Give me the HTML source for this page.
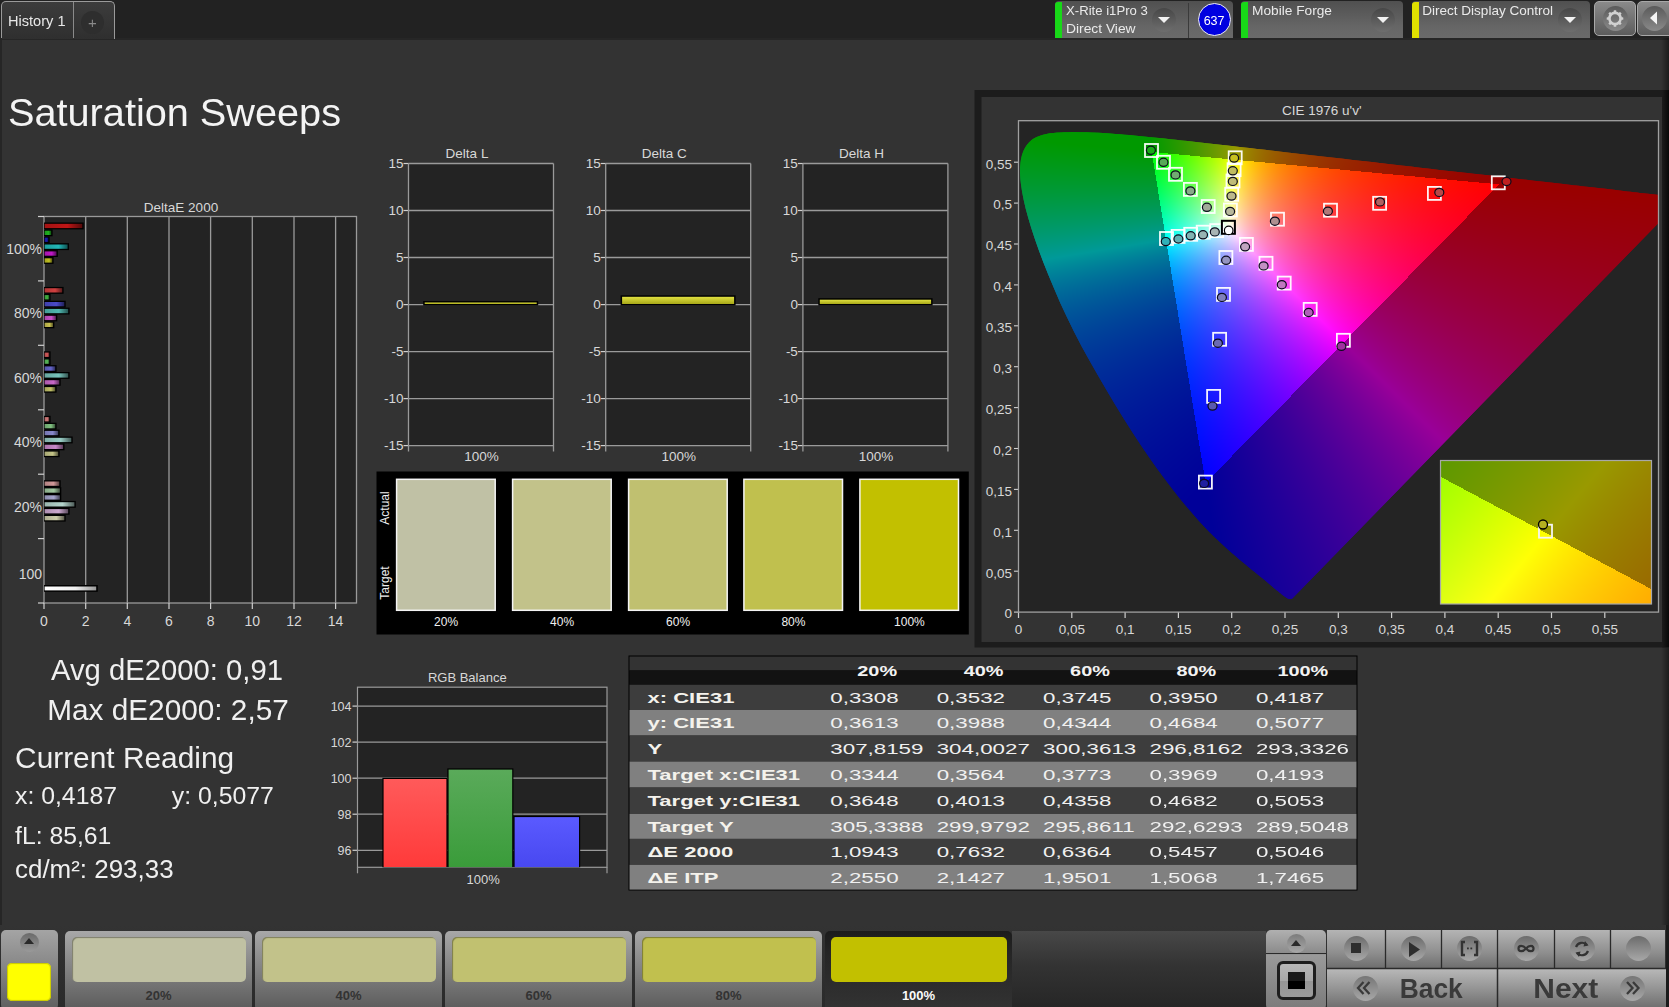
<!DOCTYPE html><html><head><meta charset="utf-8"><style>
*{margin:0;padding:0;box-sizing:border-box}
html,body{width:1669px;height:1007px;overflow:hidden;background:#333;font-family:"Liberation Sans",sans-serif;color:#e6e6e6}
.a{position:absolute}
svg text{font-family:"Liberation Sans",sans-serif}
</style></head><body><div class="a" style="left:0;top:0;width:1669px;height:38px;background:#222"></div><div class="a" style="left:0;top:38px;width:1669px;height:2px;background:#262626"></div><div class="a" style="left:1px;top:1px;width:114px;height:38px;border:1px solid #9a9a9a;border-bottom:none;border-radius:5px 5px 0 0;background:linear-gradient(#3c3c3c,#2f2f2f)"></div><div class="a" style="left:73px;top:2px;width:1px;height:36px;background:#8a8a8a"></div><div class="a" style="left:81px;top:11px;width:23px;height:23px;border-radius:50%;background:#2e2e2e"></div><div class="a" style="left:1055px;top:1px;width:178px;height:37px;border-radius:4px 4px 0 0;background:linear-gradient(#505050,#666 70%,#6a6a6a)"></div><div class="a" style="left:1055px;top:2px;width:7px;height:36px;border-radius:3px 0 0 0;background:#18d818"></div><div class="a" style="left:1241px;top:1px;width:162px;height:37px;border-radius:4px 4px 0 0;background:linear-gradient(#505050,#666 70%,#6a6a6a)"></div><div class="a" style="left:1241px;top:2px;width:7px;height:36px;border-radius:3px 0 0 0;background:#18d818"></div><div class="a" style="left:1412px;top:1px;width:178px;height:37px;border-radius:4px 4px 0 0;background:linear-gradient(#505050,#666 70%,#6a6a6a)"></div><div class="a" style="left:1412px;top:2px;width:7px;height:36px;border-radius:3px 0 0 0;background:#e0e000"></div><div class="a" style="left:1188px;top:3px;width:1.2px;height:35px;background:#3a3a3a"></div><div class="a" style="left:1152.2px;top:7.5px;width:24px;height:24px;border-radius:50%;background:linear-gradient(#474747,#6e6e6e)"></div><div class="a" style="left:1158.2px;top:16.5px;width:0;height:0;border-left:6px solid transparent;border-right:6px solid transparent;border-top:6.5px solid #f2f2f2"></div><div class="a" style="left:1371px;top:7.5px;width:24px;height:24px;border-radius:50%;background:linear-gradient(#474747,#6e6e6e)"></div><div class="a" style="left:1377px;top:16.5px;width:0;height:0;border-left:6px solid transparent;border-right:6px solid transparent;border-top:6.5px solid #f2f2f2"></div><div class="a" style="left:1558px;top:7.5px;width:24px;height:24px;border-radius:50%;background:linear-gradient(#474747,#6e6e6e)"></div><div class="a" style="left:1564px;top:16.5px;width:0;height:0;border-left:6px solid transparent;border-right:6px solid transparent;border-top:6.5px solid #f2f2f2"></div><div class="a" style="left:1197.6px;top:3px;width:33px;height:33px;border-radius:50%;background:#0000e0;border:1.2px solid #f0f0f0"></div><div class="a" style="left:1594px;top:1px;width:42px;height:35px;border-radius:5px;border:1px solid #a8a8a8;background:linear-gradient(#8a8a8a,#5c5c5c)"></div><div class="a" style="left:1637px;top:1px;width:40px;height:35px;border-radius:5px;border:1px solid #a8a8a8;background:linear-gradient(#8a8a8a,#5c5c5c)"></div><div class="a" style="left:1603px;top:6px;width:25px;height:25px;border-radius:50%;background:linear-gradient(#5a5a5a,#8a8a8a)"></div><div class="a" style="left:1642px;top:6px;width:25px;height:25px;border-radius:50%;background:linear-gradient(#5a5a5a,#8a8a8a)"></div><div class="a" style="left:0;top:38px;width:2px;height:887px;background:#262626"></div><svg class="a" style="left:0;top:0" width="1669" height="1007" viewBox="0 0 1669 1007"><defs><linearGradient id="b00" x1="0" y1="0" x2="1" y2="0"><stop offset="0" stop-color="#c01616" stop-opacity="0.85"/><stop offset="0.6" stop-color="#c01616"/><stop offset="1" stop-color="#c01616" stop-opacity="0.45"/></linearGradient><linearGradient id="b01" x1="0" y1="0" x2="1" y2="0"><stop offset="0" stop-color="#1fb01f" stop-opacity="0.85"/><stop offset="0.6" stop-color="#1fb01f"/><stop offset="1" stop-color="#1fb01f" stop-opacity="0.45"/></linearGradient><linearGradient id="b02" x1="0" y1="0" x2="1" y2="0"><stop offset="0" stop-color="#1a1ab0" stop-opacity="0.85"/><stop offset="0.6" stop-color="#1a1ab0"/><stop offset="1" stop-color="#1a1ab0" stop-opacity="0.45"/></linearGradient><linearGradient id="b03" x1="0" y1="0" x2="1" y2="0"><stop offset="0" stop-color="#22b8b8" stop-opacity="0.85"/><stop offset="0.6" stop-color="#22b8b8"/><stop offset="1" stop-color="#22b8b8" stop-opacity="0.45"/></linearGradient><linearGradient id="b04" x1="0" y1="0" x2="1" y2="0"><stop offset="0" stop-color="#c018c8" stop-opacity="0.85"/><stop offset="0.6" stop-color="#c018c8"/><stop offset="1" stop-color="#c018c8" stop-opacity="0.45"/></linearGradient><linearGradient id="b05" x1="0" y1="0" x2="1" y2="0"><stop offset="0" stop-color="#c0c022" stop-opacity="0.85"/><stop offset="0.6" stop-color="#c0c022"/><stop offset="1" stop-color="#c0c022" stop-opacity="0.45"/></linearGradient><linearGradient id="b10" x1="0" y1="0" x2="1" y2="0"><stop offset="0" stop-color="#d04040" stop-opacity="0.85"/><stop offset="0.6" stop-color="#d04040"/><stop offset="1" stop-color="#d04040" stop-opacity="0.45"/></linearGradient><linearGradient id="b11" x1="0" y1="0" x2="1" y2="0"><stop offset="0" stop-color="#40b040" stop-opacity="0.85"/><stop offset="0.6" stop-color="#40b040"/><stop offset="1" stop-color="#40b040" stop-opacity="0.45"/></linearGradient><linearGradient id="b12" x1="0" y1="0" x2="1" y2="0"><stop offset="0" stop-color="#4a4ac8" stop-opacity="0.85"/><stop offset="0.6" stop-color="#4a4ac8"/><stop offset="1" stop-color="#4a4ac8" stop-opacity="0.45"/></linearGradient><linearGradient id="b13" x1="0" y1="0" x2="1" y2="0"><stop offset="0" stop-color="#50b8b0" stop-opacity="0.85"/><stop offset="0.6" stop-color="#50b8b0"/><stop offset="1" stop-color="#50b8b0" stop-opacity="0.45"/></linearGradient><linearGradient id="b14" x1="0" y1="0" x2="1" y2="0"><stop offset="0" stop-color="#c850c8" stop-opacity="0.85"/><stop offset="0.6" stop-color="#c850c8"/><stop offset="1" stop-color="#c850c8" stop-opacity="0.45"/></linearGradient><linearGradient id="b15" x1="0" y1="0" x2="1" y2="0"><stop offset="0" stop-color="#c8c050" stop-opacity="0.85"/><stop offset="0.6" stop-color="#c8c050"/><stop offset="1" stop-color="#c8c050" stop-opacity="0.45"/></linearGradient><linearGradient id="b20" x1="0" y1="0" x2="1" y2="0"><stop offset="0" stop-color="#d05858" stop-opacity="0.85"/><stop offset="0.6" stop-color="#d05858"/><stop offset="1" stop-color="#d05858" stop-opacity="0.45"/></linearGradient><linearGradient id="b21" x1="0" y1="0" x2="1" y2="0"><stop offset="0" stop-color="#58b858" stop-opacity="0.85"/><stop offset="0.6" stop-color="#58b858"/><stop offset="1" stop-color="#58b858" stop-opacity="0.45"/></linearGradient><linearGradient id="b22" x1="0" y1="0" x2="1" y2="0"><stop offset="0" stop-color="#6464c8" stop-opacity="0.85"/><stop offset="0.6" stop-color="#6464c8"/><stop offset="1" stop-color="#6464c8" stop-opacity="0.45"/></linearGradient><linearGradient id="b23" x1="0" y1="0" x2="1" y2="0"><stop offset="0" stop-color="#78c4bc" stop-opacity="0.85"/><stop offset="0.6" stop-color="#78c4bc"/><stop offset="1" stop-color="#78c4bc" stop-opacity="0.45"/></linearGradient><linearGradient id="b24" x1="0" y1="0" x2="1" y2="0"><stop offset="0" stop-color="#c868c8" stop-opacity="0.85"/><stop offset="0.6" stop-color="#c868c8"/><stop offset="1" stop-color="#c868c8" stop-opacity="0.45"/></linearGradient><linearGradient id="b25" x1="0" y1="0" x2="1" y2="0"><stop offset="0" stop-color="#c0c068" stop-opacity="0.85"/><stop offset="0.6" stop-color="#c0c068"/><stop offset="1" stop-color="#c0c068" stop-opacity="0.45"/></linearGradient><linearGradient id="b30" x1="0" y1="0" x2="1" y2="0"><stop offset="0" stop-color="#d07878" stop-opacity="0.85"/><stop offset="0.6" stop-color="#d07878"/><stop offset="1" stop-color="#d07878" stop-opacity="0.45"/></linearGradient><linearGradient id="b31" x1="0" y1="0" x2="1" y2="0"><stop offset="0" stop-color="#80c080" stop-opacity="0.85"/><stop offset="0.6" stop-color="#80c080"/><stop offset="1" stop-color="#80c080" stop-opacity="0.45"/></linearGradient><linearGradient id="b32" x1="0" y1="0" x2="1" y2="0"><stop offset="0" stop-color="#8888cc" stop-opacity="0.85"/><stop offset="0.6" stop-color="#8888cc"/><stop offset="1" stop-color="#8888cc" stop-opacity="0.45"/></linearGradient><linearGradient id="b33" x1="0" y1="0" x2="1" y2="0"><stop offset="0" stop-color="#98ccc4" stop-opacity="0.85"/><stop offset="0.6" stop-color="#98ccc4"/><stop offset="1" stop-color="#98ccc4" stop-opacity="0.45"/></linearGradient><linearGradient id="b34" x1="0" y1="0" x2="1" y2="0"><stop offset="0" stop-color="#c888c8" stop-opacity="0.85"/><stop offset="0.6" stop-color="#c888c8"/><stop offset="1" stop-color="#c888c8" stop-opacity="0.45"/></linearGradient><linearGradient id="b35" x1="0" y1="0" x2="1" y2="0"><stop offset="0" stop-color="#c4c488" stop-opacity="0.85"/><stop offset="0.6" stop-color="#c4c488"/><stop offset="1" stop-color="#c4c488" stop-opacity="0.45"/></linearGradient><linearGradient id="b40" x1="0" y1="0" x2="1" y2="0"><stop offset="0" stop-color="#d09898" stop-opacity="0.85"/><stop offset="0.6" stop-color="#d09898"/><stop offset="1" stop-color="#d09898" stop-opacity="0.45"/></linearGradient><linearGradient id="b41" x1="0" y1="0" x2="1" y2="0"><stop offset="0" stop-color="#a0c8a0" stop-opacity="0.85"/><stop offset="0.6" stop-color="#a0c8a0"/><stop offset="1" stop-color="#a0c8a0" stop-opacity="0.45"/></linearGradient><linearGradient id="b42" x1="0" y1="0" x2="1" y2="0"><stop offset="0" stop-color="#a4a4cc" stop-opacity="0.85"/><stop offset="0.6" stop-color="#a4a4cc"/><stop offset="1" stop-color="#a4a4cc" stop-opacity="0.45"/></linearGradient><linearGradient id="b43" x1="0" y1="0" x2="1" y2="0"><stop offset="0" stop-color="#b4d4cc" stop-opacity="0.85"/><stop offset="0.6" stop-color="#b4d4cc"/><stop offset="1" stop-color="#b4d4cc" stop-opacity="0.45"/></linearGradient><linearGradient id="b44" x1="0" y1="0" x2="1" y2="0"><stop offset="0" stop-color="#cca8d0" stop-opacity="0.85"/><stop offset="0.6" stop-color="#cca8d0"/><stop offset="1" stop-color="#cca8d0" stop-opacity="0.45"/></linearGradient><linearGradient id="b45" x1="0" y1="0" x2="1" y2="0"><stop offset="0" stop-color="#ccccaa" stop-opacity="0.85"/><stop offset="0.6" stop-color="#ccccaa"/><stop offset="1" stop-color="#ccccaa" stop-opacity="0.45"/></linearGradient><linearGradient id="bw" x1="0" y1="0" x2="1" y2="0"><stop offset="0" stop-color="#fff"/><stop offset="0.6" stop-color="#eee"/><stop offset="1" stop-color="#999"/></linearGradient><linearGradient id="ylw" x1="0" y1="0" x2="0" y2="1"><stop offset="0" stop-color="#e0e040"/><stop offset="1" stop-color="#a8a818"/></linearGradient><linearGradient id="gr" x1="0" y1="0" x2="0" y2="1"><stop offset="0" stop-color="#ff5a5a"/><stop offset="1" stop-color="#ff3a3a"/></linearGradient><linearGradient id="gg" x1="0" y1="0" x2="0" y2="1"><stop offset="0" stop-color="#5aaa5a"/><stop offset="1" stop-color="#3a9c3a"/></linearGradient><linearGradient id="gb" x1="0" y1="0" x2="0" y2="1"><stop offset="0" stop-color="#5a5aff"/><stop offset="1" stop-color="#4848f0"/></linearGradient><linearGradient id="rdk" x1="0" y1="0" x2="1" y2="0"><stop offset="0" stop-color="#1c1c1c"/><stop offset="1" stop-color="#080808"/></linearGradient></defs><rect x="44" y="216.5" width="312.5" height="386.5" fill="#232323"/><line x1="85.7" y1="216.5" x2="85.7" y2="603" stroke="#9a9a9a" stroke-width="1.3"/><line x1="127.3" y1="216.5" x2="127.3" y2="603" stroke="#9a9a9a" stroke-width="1.3"/><line x1="169.0" y1="216.5" x2="169.0" y2="603" stroke="#9a9a9a" stroke-width="1.3"/><line x1="210.6" y1="216.5" x2="210.6" y2="603" stroke="#9a9a9a" stroke-width="1.3"/><line x1="252.3" y1="216.5" x2="252.3" y2="603" stroke="#9a9a9a" stroke-width="1.3"/><line x1="294.0" y1="216.5" x2="294.0" y2="603" stroke="#9a9a9a" stroke-width="1.3"/><line x1="335.6" y1="216.5" x2="335.6" y2="603" stroke="#9a9a9a" stroke-width="1.3"/><rect x="44" y="216.5" width="312.5" height="386.5" fill="none" stroke="#9a9a9a" stroke-width="1.3"/><line x1="38" y1="216.5" x2="44" y2="216.5" stroke="#d0d0d0" stroke-width="1.2"/><line x1="38" y1="280.9" x2="44" y2="280.9" stroke="#d0d0d0" stroke-width="1.2"/><line x1="38" y1="345.3" x2="44" y2="345.3" stroke="#d0d0d0" stroke-width="1.2"/><line x1="38" y1="409.8" x2="44" y2="409.8" stroke="#d0d0d0" stroke-width="1.2"/><line x1="38" y1="474.2" x2="44" y2="474.2" stroke="#d0d0d0" stroke-width="1.2"/><line x1="38" y1="538.6" x2="44" y2="538.6" stroke="#d0d0d0" stroke-width="1.2"/><line x1="38" y1="603.0" x2="44" y2="603.0" stroke="#d0d0d0" stroke-width="1.2"/><line x1="44.0" y1="603" x2="44.0" y2="609" stroke="#d0d0d0" stroke-width="1.2"/><text x="44.0" y="626" fill="#d8d8d8" font-size="14" text-anchor="middle">0</text><line x1="85.7" y1="603" x2="85.7" y2="609" stroke="#d0d0d0" stroke-width="1.2"/><text x="85.7" y="626" fill="#d8d8d8" font-size="14" text-anchor="middle">2</text><line x1="127.3" y1="603" x2="127.3" y2="609" stroke="#d0d0d0" stroke-width="1.2"/><text x="127.3" y="626" fill="#d8d8d8" font-size="14" text-anchor="middle">4</text><line x1="169.0" y1="603" x2="169.0" y2="609" stroke="#d0d0d0" stroke-width="1.2"/><text x="169.0" y="626" fill="#d8d8d8" font-size="14" text-anchor="middle">6</text><line x1="210.6" y1="603" x2="210.6" y2="609" stroke="#d0d0d0" stroke-width="1.2"/><text x="210.6" y="626" fill="#d8d8d8" font-size="14" text-anchor="middle">8</text><line x1="252.3" y1="603" x2="252.3" y2="609" stroke="#d0d0d0" stroke-width="1.2"/><text x="252.3" y="626" fill="#d8d8d8" font-size="14" text-anchor="middle">10</text><line x1="294.0" y1="603" x2="294.0" y2="609" stroke="#d0d0d0" stroke-width="1.2"/><text x="294.0" y="626" fill="#d8d8d8" font-size="14" text-anchor="middle">12</text><line x1="335.6" y1="603" x2="335.6" y2="609" stroke="#d0d0d0" stroke-width="1.2"/><text x="335.6" y="626" fill="#d8d8d8" font-size="14" text-anchor="middle">14</text><text x="42" y="254.0" fill="#d8d8d8" font-size="14" text-anchor="end">100%</text><text x="42" y="318.4" fill="#d8d8d8" font-size="14" text-anchor="end">80%</text><text x="42" y="382.8" fill="#d8d8d8" font-size="14" text-anchor="end">60%</text><text x="42" y="447.3" fill="#d8d8d8" font-size="14" text-anchor="end">40%</text><text x="42" y="511.7" fill="#d8d8d8" font-size="14" text-anchor="end">20%</text><text x="42" y="578.5" fill="#d8d8d8" font-size="14" text-anchor="end">100</text><text x="181" y="212" fill="#d8d8d8" font-size="13.5" text-anchor="middle">DeltaE 2000</text><rect x="44" y="222.5" width="39.7" height="6.9" fill="#000"/><rect x="44.6" y="223.8" width="37.7" height="4.3" fill="url(#b00)"/><rect x="44" y="229.4" width="8.6" height="6.9" fill="#000"/><rect x="44.6" y="230.7" width="6.6" height="4.3" fill="url(#b01)"/><rect x="44" y="236.3" width="5.7" height="6.9" fill="#000"/><rect x="44.6" y="237.6" width="3.7" height="4.3" fill="url(#b02)"/><rect x="44" y="243.2" width="25.0" height="6.9" fill="#000"/><rect x="44.6" y="244.5" width="23.0" height="4.3" fill="url(#b03)"/><rect x="44" y="250.1" width="13.9" height="6.9" fill="#000"/><rect x="44.6" y="251.4" width="11.9" height="4.3" fill="url(#b04)"/><rect x="44" y="257.0" width="9.6" height="6.9" fill="#000"/><rect x="44.6" y="258.3" width="7.6" height="4.3" fill="url(#b05)"/><rect x="44" y="286.9" width="19.6" height="6.9" fill="#000"/><rect x="44.6" y="288.2" width="17.6" height="4.3" fill="url(#b10)"/><rect x="44" y="293.8" width="6.6" height="6.9" fill="#000"/><rect x="44.6" y="295.1" width="4.6" height="4.3" fill="url(#b11)"/><rect x="44" y="300.7" width="21.7" height="6.9" fill="#000"/><rect x="44.6" y="302.0" width="19.7" height="4.3" fill="url(#b12)"/><rect x="44" y="307.6" width="25.6" height="6.9" fill="#000"/><rect x="44.6" y="308.9" width="23.6" height="4.3" fill="url(#b13)"/><rect x="44" y="314.5" width="13.3" height="6.9" fill="#000"/><rect x="44.6" y="315.8" width="11.3" height="4.3" fill="url(#b14)"/><rect x="44" y="321.4" width="10.4" height="6.9" fill="#000"/><rect x="44.6" y="322.7" width="8.4" height="4.3" fill="url(#b15)"/><rect x="44" y="351.3" width="6.6" height="6.9" fill="#000"/><rect x="44.6" y="352.6" width="4.6" height="4.3" fill="url(#b20)"/><rect x="44" y="358.2" width="6.6" height="6.9" fill="#000"/><rect x="44.6" y="359.5" width="4.6" height="4.3" fill="url(#b21)"/><rect x="44" y="365.1" width="12.6" height="6.9" fill="#000"/><rect x="44.6" y="366.4" width="10.6" height="4.3" fill="url(#b22)"/><rect x="44" y="372.0" width="25.6" height="6.9" fill="#000"/><rect x="44.6" y="373.3" width="23.6" height="4.3" fill="url(#b23)"/><rect x="44" y="378.9" width="16.7" height="6.9" fill="#000"/><rect x="44.6" y="380.2" width="14.7" height="4.3" fill="url(#b24)"/><rect x="44" y="385.8" width="12.6" height="6.9" fill="#000"/><rect x="44.6" y="387.1" width="10.6" height="4.3" fill="url(#b25)"/><rect x="44" y="415.8" width="6.6" height="6.9" fill="#000"/><rect x="44.6" y="417.1" width="4.6" height="4.3" fill="url(#b30)"/><rect x="44" y="422.7" width="12.6" height="6.9" fill="#000"/><rect x="44.6" y="424.0" width="10.6" height="4.3" fill="url(#b31)"/><rect x="44" y="429.6" width="15.6" height="6.9" fill="#000"/><rect x="44.6" y="430.9" width="13.6" height="4.3" fill="url(#b32)"/><rect x="44" y="436.5" width="28.7" height="6.9" fill="#000"/><rect x="44.6" y="437.8" width="26.7" height="4.3" fill="url(#b33)"/><rect x="44" y="443.4" width="20.5" height="6.9" fill="#000"/><rect x="44.6" y="444.7" width="18.5" height="4.3" fill="url(#b34)"/><rect x="44" y="450.3" width="15.6" height="6.9" fill="#000"/><rect x="44.6" y="451.6" width="13.6" height="4.3" fill="url(#b35)"/><rect x="44" y="480.2" width="16.7" height="6.9" fill="#000"/><rect x="44.6" y="481.5" width="14.7" height="4.3" fill="url(#b40)"/><rect x="44" y="487.1" width="17.3" height="6.9" fill="#000"/><rect x="44.6" y="488.4" width="15.3" height="4.3" fill="url(#b41)"/><rect x="44" y="494.0" width="17.3" height="6.9" fill="#000"/><rect x="44.6" y="495.3" width="15.3" height="4.3" fill="url(#b42)"/><rect x="44" y="500.9" width="31.8" height="6.9" fill="#000"/><rect x="44.6" y="502.2" width="29.8" height="4.3" fill="url(#b43)"/><rect x="44" y="507.8" width="25.6" height="6.9" fill="#000"/><rect x="44.6" y="509.1" width="23.6" height="4.3" fill="url(#b44)"/><rect x="44" y="514.7" width="21.7" height="6.9" fill="#000"/><rect x="44.6" y="516.0" width="19.7" height="4.3" fill="url(#b45)"/><rect x="44" y="585" width="53.8" height="6.8" fill="#000"/><rect x="44.6" y="586.5" width="51.6" height="3.9" fill="url(#bw)"/><rect x="408.5" y="163.5" width="145.0" height="282.1" fill="#232323"/><line x1="408.5" y1="163.5" x2="553.5" y2="163.5" stroke="#9a9a9a" stroke-width="1.3"/><line x1="403.5" y1="163.5" x2="408.5" y2="163.5" stroke="#d0d0d0" stroke-width="1.2"/><text x="403.5" y="168.3" fill="#d8d8d8" font-size="13.5" text-anchor="end">15</text><line x1="408.5" y1="210.5" x2="553.5" y2="210.5" stroke="#9a9a9a" stroke-width="1.3"/><line x1="403.5" y1="210.5" x2="408.5" y2="210.5" stroke="#d0d0d0" stroke-width="1.2"/><text x="403.5" y="215.3" fill="#d8d8d8" font-size="13.5" text-anchor="end">10</text><line x1="408.5" y1="257.5" x2="553.5" y2="257.5" stroke="#9a9a9a" stroke-width="1.3"/><line x1="403.5" y1="257.5" x2="408.5" y2="257.5" stroke="#d0d0d0" stroke-width="1.2"/><text x="403.5" y="262.3" fill="#d8d8d8" font-size="13.5" text-anchor="end">5</text><line x1="408.5" y1="304.6" x2="553.5" y2="304.6" stroke="#9a9a9a" stroke-width="1.3"/><line x1="403.5" y1="304.6" x2="408.5" y2="304.6" stroke="#d0d0d0" stroke-width="1.2"/><text x="403.5" y="309.4" fill="#d8d8d8" font-size="13.5" text-anchor="end">0</text><line x1="408.5" y1="351.6" x2="553.5" y2="351.6" stroke="#9a9a9a" stroke-width="1.3"/><line x1="403.5" y1="351.6" x2="408.5" y2="351.6" stroke="#d0d0d0" stroke-width="1.2"/><text x="403.5" y="356.4" fill="#d8d8d8" font-size="13.5" text-anchor="end">-5</text><line x1="408.5" y1="398.6" x2="553.5" y2="398.6" stroke="#9a9a9a" stroke-width="1.3"/><line x1="403.5" y1="398.6" x2="408.5" y2="398.6" stroke="#d0d0d0" stroke-width="1.2"/><text x="403.5" y="403.4" fill="#d8d8d8" font-size="13.5" text-anchor="end">-10</text><line x1="408.5" y1="445.6" x2="553.5" y2="445.6" stroke="#9a9a9a" stroke-width="1.3"/><line x1="403.5" y1="445.6" x2="408.5" y2="445.6" stroke="#d0d0d0" stroke-width="1.2"/><text x="403.5" y="450.4" fill="#d8d8d8" font-size="13.5" text-anchor="end">-15</text><line x1="408.5" y1="163.5" x2="408.5" y2="451.6" stroke="#9a9a9a" stroke-width="1.3"/><line x1="553.5" y1="163.5" x2="553.5" y2="451.6" stroke="#9a9a9a" stroke-width="1.3"/><text x="467.0" y="158" fill="#d8d8d8" font-size="13.5" text-anchor="middle">Delta L</text><text x="481.5" y="461" fill="#d8d8d8" font-size="13.5" text-anchor="middle">100%</text><rect x="423.2" y="301.0" width="115.0" height="4.5" fill="#000"/><rect x="424.7" y="302.5" width="112.0" height="1.5" fill="url(#ylw)"/><rect x="605.7" y="163.5" width="145.0" height="282.1" fill="#232323"/><line x1="605.7" y1="163.5" x2="750.7" y2="163.5" stroke="#9a9a9a" stroke-width="1.3"/><line x1="600.7" y1="163.5" x2="605.7" y2="163.5" stroke="#d0d0d0" stroke-width="1.2"/><text x="600.7" y="168.3" fill="#d8d8d8" font-size="13.5" text-anchor="end">15</text><line x1="605.7" y1="210.5" x2="750.7" y2="210.5" stroke="#9a9a9a" stroke-width="1.3"/><line x1="600.7" y1="210.5" x2="605.7" y2="210.5" stroke="#d0d0d0" stroke-width="1.2"/><text x="600.7" y="215.3" fill="#d8d8d8" font-size="13.5" text-anchor="end">10</text><line x1="605.7" y1="257.5" x2="750.7" y2="257.5" stroke="#9a9a9a" stroke-width="1.3"/><line x1="600.7" y1="257.5" x2="605.7" y2="257.5" stroke="#d0d0d0" stroke-width="1.2"/><text x="600.7" y="262.3" fill="#d8d8d8" font-size="13.5" text-anchor="end">5</text><line x1="605.7" y1="304.6" x2="750.7" y2="304.6" stroke="#9a9a9a" stroke-width="1.3"/><line x1="600.7" y1="304.6" x2="605.7" y2="304.6" stroke="#d0d0d0" stroke-width="1.2"/><text x="600.7" y="309.4" fill="#d8d8d8" font-size="13.5" text-anchor="end">0</text><line x1="605.7" y1="351.6" x2="750.7" y2="351.6" stroke="#9a9a9a" stroke-width="1.3"/><line x1="600.7" y1="351.6" x2="605.7" y2="351.6" stroke="#d0d0d0" stroke-width="1.2"/><text x="600.7" y="356.4" fill="#d8d8d8" font-size="13.5" text-anchor="end">-5</text><line x1="605.7" y1="398.6" x2="750.7" y2="398.6" stroke="#9a9a9a" stroke-width="1.3"/><line x1="600.7" y1="398.6" x2="605.7" y2="398.6" stroke="#d0d0d0" stroke-width="1.2"/><text x="600.7" y="403.4" fill="#d8d8d8" font-size="13.5" text-anchor="end">-10</text><line x1="605.7" y1="445.6" x2="750.7" y2="445.6" stroke="#9a9a9a" stroke-width="1.3"/><line x1="600.7" y1="445.6" x2="605.7" y2="445.6" stroke="#d0d0d0" stroke-width="1.2"/><text x="600.7" y="450.4" fill="#d8d8d8" font-size="13.5" text-anchor="end">-15</text><line x1="605.7" y1="163.5" x2="605.7" y2="451.6" stroke="#9a9a9a" stroke-width="1.3"/><line x1="750.7" y1="163.5" x2="750.7" y2="451.6" stroke="#9a9a9a" stroke-width="1.3"/><text x="664.2" y="158" fill="#d8d8d8" font-size="13.5" text-anchor="middle">Delta C</text><text x="678.7" y="461" fill="#d8d8d8" font-size="13.5" text-anchor="middle">100%</text><rect x="620.6" y="295.3" width="115.0" height="10.2" fill="#000"/><rect x="622.1" y="296.8" width="112.0" height="7.2" fill="url(#ylw)"/><rect x="802.9" y="163.5" width="145.0" height="282.1" fill="#232323"/><line x1="802.9" y1="163.5" x2="947.9" y2="163.5" stroke="#9a9a9a" stroke-width="1.3"/><line x1="797.9" y1="163.5" x2="802.9" y2="163.5" stroke="#d0d0d0" stroke-width="1.2"/><text x="797.9" y="168.3" fill="#d8d8d8" font-size="13.5" text-anchor="end">15</text><line x1="802.9" y1="210.5" x2="947.9" y2="210.5" stroke="#9a9a9a" stroke-width="1.3"/><line x1="797.9" y1="210.5" x2="802.9" y2="210.5" stroke="#d0d0d0" stroke-width="1.2"/><text x="797.9" y="215.3" fill="#d8d8d8" font-size="13.5" text-anchor="end">10</text><line x1="802.9" y1="257.5" x2="947.9" y2="257.5" stroke="#9a9a9a" stroke-width="1.3"/><line x1="797.9" y1="257.5" x2="802.9" y2="257.5" stroke="#d0d0d0" stroke-width="1.2"/><text x="797.9" y="262.3" fill="#d8d8d8" font-size="13.5" text-anchor="end">5</text><line x1="802.9" y1="304.6" x2="947.9" y2="304.6" stroke="#9a9a9a" stroke-width="1.3"/><line x1="797.9" y1="304.6" x2="802.9" y2="304.6" stroke="#d0d0d0" stroke-width="1.2"/><text x="797.9" y="309.4" fill="#d8d8d8" font-size="13.5" text-anchor="end">0</text><line x1="802.9" y1="351.6" x2="947.9" y2="351.6" stroke="#9a9a9a" stroke-width="1.3"/><line x1="797.9" y1="351.6" x2="802.9" y2="351.6" stroke="#d0d0d0" stroke-width="1.2"/><text x="797.9" y="356.4" fill="#d8d8d8" font-size="13.5" text-anchor="end">-5</text><line x1="802.9" y1="398.6" x2="947.9" y2="398.6" stroke="#9a9a9a" stroke-width="1.3"/><line x1="797.9" y1="398.6" x2="802.9" y2="398.6" stroke="#d0d0d0" stroke-width="1.2"/><text x="797.9" y="403.4" fill="#d8d8d8" font-size="13.5" text-anchor="end">-10</text><line x1="802.9" y1="445.6" x2="947.9" y2="445.6" stroke="#9a9a9a" stroke-width="1.3"/><line x1="797.9" y1="445.6" x2="802.9" y2="445.6" stroke="#d0d0d0" stroke-width="1.2"/><text x="797.9" y="450.4" fill="#d8d8d8" font-size="13.5" text-anchor="end">-15</text><line x1="802.9" y1="163.5" x2="802.9" y2="451.6" stroke="#9a9a9a" stroke-width="1.3"/><line x1="947.9" y1="163.5" x2="947.9" y2="451.6" stroke="#9a9a9a" stroke-width="1.3"/><text x="861.4" y="158" fill="#d8d8d8" font-size="13.5" text-anchor="middle">Delta H</text><text x="875.9" y="461" fill="#d8d8d8" font-size="13.5" text-anchor="middle">100%</text><rect x="818.3" y="298.2" width="114.3" height="7.3" fill="#000"/><rect x="819.8" y="299.7" width="111.3" height="4.3" fill="url(#ylw)"/><rect x="376.5" y="471.5" width="592.3" height="163" fill="#000"/><rect x="396.6" y="479.3" width="98.6" height="131" fill="#c0c1a5" stroke="#f4f4f4" stroke-width="1.5"/><text x="446.1" y="626" fill="#f0f0f0" font-size="12" text-anchor="middle">20%</text><rect x="512.6" y="479.3" width="98.6" height="131" fill="#c2c28a" stroke="#f4f4f4" stroke-width="1.5"/><text x="562.1" y="626" fill="#f0f0f0" font-size="12" text-anchor="middle">40%</text><rect x="628.6" y="479.3" width="98.6" height="131" fill="#c0c070" stroke="#f4f4f4" stroke-width="1.5"/><text x="678.1" y="626" fill="#f0f0f0" font-size="12" text-anchor="middle">60%</text><rect x="743.9" y="479.3" width="98.6" height="131" fill="#c0c04e" stroke="#f4f4f4" stroke-width="1.5"/><text x="793.4" y="626" fill="#f0f0f0" font-size="12" text-anchor="middle">80%</text><rect x="859.9" y="479.3" width="98.6" height="131" fill="#c2c000" stroke="#f4f4f4" stroke-width="1.5"/><text x="909.4" y="626" fill="#f0f0f0" font-size="12" text-anchor="middle">100%</text><text transform="translate(389,508) rotate(-90)" fill="#f0f0f0" font-size="12" text-anchor="middle">Actual</text><text transform="translate(389,583) rotate(-90)" fill="#f0f0f0" font-size="12" text-anchor="middle">Target</text><rect x="357.5" y="687.2" width="249.5" height="180.0999999999999" fill="#232323"/><line x1="357.5" y1="706.1" x2="607" y2="706.1" stroke="#9a9a9a" stroke-width="1.2"/><line x1="352.5" y1="706.1" x2="357.5" y2="706.1" stroke="#d0d0d0" stroke-width="1.2"/><text x="351.5" y="710.6" fill="#d8d8d8" font-size="12.5" text-anchor="end">104</text><line x1="357.5" y1="742.1" x2="607" y2="742.1" stroke="#9a9a9a" stroke-width="1.2"/><line x1="352.5" y1="742.1" x2="357.5" y2="742.1" stroke="#d0d0d0" stroke-width="1.2"/><text x="351.5" y="746.6" fill="#d8d8d8" font-size="12.5" text-anchor="end">102</text><line x1="357.5" y1="778.2" x2="607" y2="778.2" stroke="#9a9a9a" stroke-width="1.2"/><line x1="352.5" y1="778.2" x2="357.5" y2="778.2" stroke="#d0d0d0" stroke-width="1.2"/><text x="351.5" y="782.7" fill="#d8d8d8" font-size="12.5" text-anchor="end">100</text><line x1="357.5" y1="814.2" x2="607" y2="814.2" stroke="#9a9a9a" stroke-width="1.2"/><line x1="352.5" y1="814.2" x2="357.5" y2="814.2" stroke="#d0d0d0" stroke-width="1.2"/><text x="351.5" y="818.8" fill="#d8d8d8" font-size="12.5" text-anchor="end">98</text><line x1="357.5" y1="850.3" x2="607" y2="850.3" stroke="#9a9a9a" stroke-width="1.2"/><line x1="352.5" y1="850.3" x2="357.5" y2="850.3" stroke="#d0d0d0" stroke-width="1.2"/><text x="351.5" y="854.8" fill="#d8d8d8" font-size="12.5" text-anchor="end">96</text><rect x="357.5" y="687.2" width="249.5" height="180.0999999999999" fill="none" stroke="#9a9a9a" stroke-width="1.2"/><line x1="357.5" y1="867.3" x2="357.5" y2="873.3" stroke="#9a9a9a" stroke-width="1.2"/><line x1="607" y1="867.3" x2="607" y2="873.3" stroke="#9a9a9a" stroke-width="1.2"/><text x="467.3" y="681.5" fill="#d8d8d8" font-size="13" text-anchor="middle">RGB Balance</text><text x="483.2" y="883.5" fill="#d8d8d8" font-size="13" text-anchor="middle">100%</text><rect x="382.4" y="777.8" width="65" height="89.5" fill="#000"/><rect x="383.6" y="779" width="62.8" height="88" fill="url(#gr)"/><rect x="447.3" y="768.4" width="66.1" height="98.9" fill="#000"/><rect x="448.6" y="769.6" width="63.6" height="97.5" fill="url(#gg)"/><rect x="513.4" y="815.9" width="66.8" height="51.4" fill="#000"/><rect x="514.6" y="817.1" width="64.4" height="50" fill="url(#gb)"/><rect x="974.5" y="90" width="694.5" height="557.5" fill="#1c1c1c"/><rect x="981.5" y="97" width="680.5" height="545" fill="#333"/><rect x="1662" y="90" width="7" height="557.5" fill="url(#rdk)"/><rect x="1018.5" y="120.7" width="640" height="491.4" fill="#242424"/><line x1="1014" y1="612.1" x2="1018.5" y2="612.1" stroke="#d0d0d0" stroke-width="1.1"/><text x="1012" y="618.4" fill="#d8d8d8" font-size="13.5" text-anchor="end">0</text><line x1="1014" y1="571.2" x2="1018.5" y2="571.2" stroke="#d0d0d0" stroke-width="1.1"/><text x="1012" y="577.5" fill="#d8d8d8" font-size="13.5" text-anchor="end">0,05</text><line x1="1014" y1="530.3" x2="1018.5" y2="530.3" stroke="#d0d0d0" stroke-width="1.1"/><text x="1012" y="536.6" fill="#d8d8d8" font-size="13.5" text-anchor="end">0,1</text><line x1="1014" y1="489.4" x2="1018.5" y2="489.4" stroke="#d0d0d0" stroke-width="1.1"/><text x="1012" y="495.7" fill="#d8d8d8" font-size="13.5" text-anchor="end">0,15</text><line x1="1014" y1="448.5" x2="1018.5" y2="448.5" stroke="#d0d0d0" stroke-width="1.1"/><text x="1012" y="454.8" fill="#d8d8d8" font-size="13.5" text-anchor="end">0,2</text><line x1="1014" y1="407.6" x2="1018.5" y2="407.6" stroke="#d0d0d0" stroke-width="1.1"/><text x="1012" y="413.9" fill="#d8d8d8" font-size="13.5" text-anchor="end">0,25</text><line x1="1014" y1="366.7" x2="1018.5" y2="366.7" stroke="#d0d0d0" stroke-width="1.1"/><text x="1012" y="373.0" fill="#d8d8d8" font-size="13.5" text-anchor="end">0,3</text><line x1="1014" y1="325.8" x2="1018.5" y2="325.8" stroke="#d0d0d0" stroke-width="1.1"/><text x="1012" y="332.1" fill="#d8d8d8" font-size="13.5" text-anchor="end">0,35</text><line x1="1014" y1="284.9" x2="1018.5" y2="284.9" stroke="#d0d0d0" stroke-width="1.1"/><text x="1012" y="291.2" fill="#d8d8d8" font-size="13.5" text-anchor="end">0,4</text><line x1="1014" y1="244.0" x2="1018.5" y2="244.0" stroke="#d0d0d0" stroke-width="1.1"/><text x="1012" y="250.3" fill="#d8d8d8" font-size="13.5" text-anchor="end">0,45</text><line x1="1014" y1="203.1" x2="1018.5" y2="203.1" stroke="#d0d0d0" stroke-width="1.1"/><text x="1012" y="209.4" fill="#d8d8d8" font-size="13.5" text-anchor="end">0,5</text><line x1="1014" y1="162.2" x2="1018.5" y2="162.2" stroke="#d0d0d0" stroke-width="1.1"/><text x="1012" y="168.5" fill="#d8d8d8" font-size="13.5" text-anchor="end">0,55</text><line x1="1018.5" y1="612.1" x2="1018.5" y2="618" stroke="#d0d0d0" stroke-width="1.2"/><text x="1018.5" y="634" fill="#d8d8d8" font-size="13.5" text-anchor="middle">0</text><line x1="1071.8" y1="612.1" x2="1071.8" y2="618" stroke="#d0d0d0" stroke-width="1.2"/><text x="1071.8" y="634" fill="#d8d8d8" font-size="13.5" text-anchor="middle">0,05</text><line x1="1125.1" y1="612.1" x2="1125.1" y2="618" stroke="#d0d0d0" stroke-width="1.2"/><text x="1125.1" y="634" fill="#d8d8d8" font-size="13.5" text-anchor="middle">0,1</text><line x1="1178.4" y1="612.1" x2="1178.4" y2="618" stroke="#d0d0d0" stroke-width="1.2"/><text x="1178.4" y="634" fill="#d8d8d8" font-size="13.5" text-anchor="middle">0,15</text><line x1="1231.7" y1="612.1" x2="1231.7" y2="618" stroke="#d0d0d0" stroke-width="1.2"/><text x="1231.7" y="634" fill="#d8d8d8" font-size="13.5" text-anchor="middle">0,2</text><line x1="1285.0" y1="612.1" x2="1285.0" y2="618" stroke="#d0d0d0" stroke-width="1.2"/><text x="1285.0" y="634" fill="#d8d8d8" font-size="13.5" text-anchor="middle">0,25</text><line x1="1338.3" y1="612.1" x2="1338.3" y2="618" stroke="#d0d0d0" stroke-width="1.2"/><text x="1338.3" y="634" fill="#d8d8d8" font-size="13.5" text-anchor="middle">0,3</text><line x1="1391.6" y1="612.1" x2="1391.6" y2="618" stroke="#d0d0d0" stroke-width="1.2"/><text x="1391.6" y="634" fill="#d8d8d8" font-size="13.5" text-anchor="middle">0,35</text><line x1="1444.9" y1="612.1" x2="1444.9" y2="618" stroke="#d0d0d0" stroke-width="1.2"/><text x="1444.9" y="634" fill="#d8d8d8" font-size="13.5" text-anchor="middle">0,4</text><line x1="1498.2" y1="612.1" x2="1498.2" y2="618" stroke="#d0d0d0" stroke-width="1.2"/><text x="1498.2" y="634" fill="#d8d8d8" font-size="13.5" text-anchor="middle">0,45</text><line x1="1551.5" y1="612.1" x2="1551.5" y2="618" stroke="#d0d0d0" stroke-width="1.2"/><text x="1551.5" y="634" fill="#d8d8d8" font-size="13.5" text-anchor="middle">0,5</text><line x1="1604.8" y1="612.1" x2="1604.8" y2="618" stroke="#d0d0d0" stroke-width="1.2"/><text x="1604.8" y="634" fill="#d8d8d8" font-size="13.5" text-anchor="middle">0,55</text><text x="1321.8" y="115" fill="#d8d8d8" font-size="13.5" text-anchor="middle">CIE 1976 u'v'</text></svg><svg class="a" style="left:0;top:0" width="1669" height="1007" viewBox="0 0 1669 1007"><defs><clipPath id="hs"><path d="M1292.3 598.5 L1292.2 598.5 L1292.2 598.5 L1292.1 598.5 L1292.1 598.5 L1292.0 598.6 L1292.0 598.7 L1291.9 598.7 L1291.8 598.8 L1291.8 598.8 L1291.7 598.8 L1291.6 598.8 L1291.5 598.8 L1291.4 598.9 L1291.3 598.9 L1291.2 599.0 L1291.1 599.1 L1291.0 599.1 L1290.8 599.1 L1290.7 599.1 L1290.5 599.1 L1290.4 599.1 L1290.2 599.1 L1290.0 599.1 L1289.8 599.1 L1289.6 599.1 L1289.4 599.1 L1289.2 599.1 L1288.9 599.1 L1288.6 599.0 L1288.3 598.8 L1287.9 598.6 L1287.4 598.3 L1286.8 597.9 L1286.1 597.5 L1285.4 597.0 L1284.6 596.5 L1283.8 595.8 L1282.9 595.2 L1281.9 594.4 L1280.9 593.6 L1279.7 592.6 L1278.4 591.6 L1277.0 590.5 L1275.5 589.2 L1273.9 587.9 L1272.3 586.5 L1270.5 585.0 L1268.7 583.5 L1266.7 581.8 L1264.7 580.1 L1262.5 578.3 L1260.1 576.4 L1257.5 574.3 L1254.8 572.0 L1251.9 569.7 L1248.8 567.2 L1245.7 564.6 L1242.4 561.9 L1238.9 559.0 L1235.3 555.8 L1231.4 552.5 L1227.3 548.9 L1223.1 545.1 L1218.6 540.8 L1214.0 536.4 L1209.2 531.7 L1204.2 526.5 L1198.6 520.5 L1192.6 513.6 L1186.1 506.0 L1179.2 497.7 L1172.1 488.6 L1164.7 478.8 L1156.9 468.2 L1148.9 456.9 L1140.8 444.9 L1132.4 432.2 L1123.9 418.7 L1115.2 404.7 L1106.8 390.6 L1098.3 376.1 L1089.9 361.3 L1081.7 346.4 L1074.1 331.8 L1067.0 317.3 L1060.3 302.9 L1054.2 288.8 L1048.5 275.3 L1043.4 262.5 L1038.8 250.2 L1034.7 238.6 L1031.2 227.8 L1028.2 217.8 L1025.7 208.7 L1023.8 200.2 L1022.2 192.4 L1021.1 185.3 L1020.3 179.0 L1020.0 173.2 L1020.0 167.8 L1020.4 162.9 L1021.1 158.5 L1022.1 154.5 L1023.4 150.9 L1025.1 147.6 L1027.0 144.8 L1029.2 142.3 L1031.6 140.1 L1034.2 138.3 L1037.0 136.9 L1040.0 135.7 L1043.1 134.7 L1046.4 133.9 L1049.8 133.3 L1053.3 133.0 L1056.9 132.6 L1060.5 132.4 L1064.3 132.2 L1068.1 132.2 L1071.9 132.1 L1075.6 132.1 L1079.4 132.2 L1083.2 132.2 L1087.1 132.3 L1091.0 132.5 L1094.9 132.6 L1098.9 132.8 L1103.0 133.1 L1107.1 133.3 L1111.3 133.6 L1115.6 133.9 L1120.1 134.3 L1124.6 134.7 L1129.1 135.1 L1133.8 135.5 L1138.6 136.0 L1143.6 136.4 L1148.6 136.9 L1153.8 137.5 L1159.1 138.0 L1164.5 138.6 L1170.1 139.2 L1175.8 139.8 L1181.7 140.4 L1187.7 141.1 L1193.9 141.8 L1200.2 142.5 L1206.7 143.2 L1213.4 144.0 L1220.3 144.8 L1227.3 145.5 L1234.5 146.4 L1241.8 147.2 L1249.4 148.1 L1257.1 148.9 L1264.9 149.8 L1273.0 150.8 L1281.2 151.7 L1289.6 152.7 L1298.2 153.7 L1306.9 154.7 L1315.8 155.7 L1324.8 156.7 L1334.0 157.8 L1343.3 158.8 L1352.8 159.9 L1362.3 161.0 L1371.9 162.1 L1381.6 163.2 L1391.4 164.4 L1401.2 165.5 L1410.9 166.6 L1420.4 167.7 L1429.9 168.8 L1439.3 169.9 L1448.6 170.9 L1457.9 172.0 L1467.3 173.1 L1476.4 174.1 L1485.3 175.1 L1494.0 176.1 L1502.4 177.1 L1510.7 178.0 L1518.6 178.9 L1526.4 179.8 L1533.9 180.7 L1541.1 181.5 L1548.1 182.3 L1554.7 183.1 L1561.1 183.8 L1567.2 184.5 L1573.1 185.2 L1578.7 185.8 L1584.0 186.4 L1589.1 187.0 L1594.1 187.6 L1598.8 188.1 L1603.2 188.6 L1607.6 189.1 L1611.7 189.6 L1615.8 190.1 L1619.7 190.5 L1623.4 191.0 L1627.1 191.4 L1630.5 191.8 L1633.8 192.2 L1637.0 192.5 L1640.0 192.9 L1642.9 193.2 L1645.6 193.5 L1648.1 193.8 L1650.5 194.0 L1652.7 194.3 L1654.8 194.5 L1656.8 194.8 L1658.6 195.0 L1660.4 195.2 L1662.0 195.4 L1663.5 195.5 L1665.0 195.7 L1666.1 195.8 L1667.1 196.0 L1668.2 196.1 L1669.7 196.3 L1671.9 196.5 L1674.6 196.8 L1677.2 197.1 L1679.3 197.4 L1680.7 197.5 L1681.8 197.6 L1682.5 197.7 L1683.0 197.8Z"/></clipPath><clipPath id="pl"><rect x="1018.5" y="120.7" width="640" height="491.4"/></clipPath><filter id="fb" x="-5%" y="-5%" width="110%" height="110%"><feGaussianBlur stdDeviation="5"/></filter></defs><g clip-path="url(#pl)"><g clip-path="url(#hs)"><g filter="url(#fb)"><rect x="1018" y="120" width="14" height="14" fill="#009900"/><rect x="1030" y="120" width="14" height="14" fill="#009900"/><rect x="1042" y="120" width="14" height="14" fill="#009900"/><rect x="1054" y="120" width="14" height="14" fill="#009900"/><rect x="1066" y="120" width="14" height="14" fill="#009900"/><rect x="1078" y="120" width="14" height="14" fill="#009900"/><rect x="1090" y="120" width="14" height="14" fill="#009900"/><rect x="1102" y="120" width="14" height="14" fill="#009900"/><rect x="1114" y="120" width="14" height="14" fill="#009900"/><rect x="1126" y="120" width="14" height="14" fill="#009900"/><rect x="1138" y="120" width="14" height="14" fill="#009900"/><rect x="1150" y="120" width="14" height="14" fill="#0b9900"/><rect x="1162" y="120" width="14" height="14" fill="#1c9900"/><rect x="1018" y="132" width="14" height="14" fill="#009900"/><rect x="1030" y="132" width="14" height="14" fill="#009900"/><rect x="1042" y="132" width="14" height="14" fill="#009900"/><rect x="1054" y="132" width="14" height="14" fill="#009900"/><rect x="1066" y="132" width="14" height="14" fill="#009900"/><rect x="1078" y="132" width="14" height="14" fill="#009900"/><rect x="1090" y="132" width="14" height="14" fill="#009900"/><rect x="1102" y="132" width="14" height="14" fill="#009900"/><rect x="1114" y="132" width="14" height="14" fill="#009900"/><rect x="1126" y="132" width="14" height="14" fill="#009900"/><rect x="1138" y="132" width="14" height="14" fill="#009900"/><rect x="1150" y="132" width="14" height="14" fill="#099900"/><rect x="1162" y="132" width="14" height="14" fill="#1a9900"/><rect x="1174" y="132" width="14" height="14" fill="#2d9900"/><rect x="1186" y="132" width="14" height="14" fill="#409900"/><rect x="1198" y="132" width="14" height="14" fill="#559900"/><rect x="1210" y="132" width="14" height="14" fill="#6c9900"/><rect x="1222" y="132" width="14" height="14" fill="#849900"/><rect x="1234" y="132" width="14" height="14" fill="#999300"/><rect x="1246" y="132" width="14" height="14" fill="#997d00"/><rect x="1258" y="132" width="14" height="14" fill="#996b00"/><rect x="1270" y="132" width="14" height="14" fill="#995d00"/><rect x="1018" y="144" width="14" height="14" fill="#00990a"/><rect x="1030" y="144" width="14" height="14" fill="#009909"/><rect x="1042" y="144" width="14" height="14" fill="#009908"/><rect x="1054" y="144" width="14" height="14" fill="#009907"/><rect x="1066" y="144" width="14" height="14" fill="#009906"/><rect x="1078" y="144" width="14" height="14" fill="#009905"/><rect x="1090" y="144" width="14" height="14" fill="#009904"/><rect x="1102" y="144" width="14" height="14" fill="#009903"/><rect x="1114" y="144" width="14" height="14" fill="#009901"/><rect x="1126" y="144" width="14" height="14" fill="#009900"/><rect x="1138" y="144" width="14" height="14" fill="#009900"/><rect x="1150" y="144" width="14" height="14" fill="#069900"/><rect x="1162" y="144" width="14" height="14" fill="#189900"/><rect x="1174" y="144" width="14" height="14" fill="#2b9900"/><rect x="1186" y="144" width="14" height="14" fill="#3f9900"/><rect x="1198" y="144" width="14" height="14" fill="#559900"/><rect x="1210" y="144" width="14" height="14" fill="#6d9900"/><rect x="1222" y="144" width="14" height="14" fill="#869900"/><rect x="1234" y="144" width="14" height="14" fill="#999000"/><rect x="1246" y="144" width="14" height="14" fill="#997a00"/><rect x="1258" y="144" width="14" height="14" fill="#996800"/><rect x="1270" y="144" width="14" height="14" fill="#995a00"/><rect x="1282" y="144" width="14" height="14" fill="#994e00"/><rect x="1294" y="144" width="14" height="14" fill="#994400"/><rect x="1306" y="144" width="14" height="14" fill="#993c00"/><rect x="1318" y="144" width="14" height="14" fill="#993400"/><rect x="1330" y="144" width="14" height="14" fill="#992e00"/><rect x="1342" y="144" width="14" height="14" fill="#992900"/><rect x="1354" y="144" width="14" height="14" fill="#992400"/><rect x="1366" y="144" width="14" height="14" fill="#991f00"/><rect x="1378" y="144" width="14" height="14" fill="#991b00"/><rect x="1018" y="156" width="14" height="14" fill="#009916"/><rect x="1030" y="156" width="14" height="14" fill="#009915"/><rect x="1042" y="156" width="14" height="14" fill="#009915"/><rect x="1054" y="156" width="14" height="14" fill="#009914"/><rect x="1066" y="156" width="14" height="14" fill="#009914"/><rect x="1078" y="156" width="14" height="14" fill="#009913"/><rect x="1090" y="156" width="14" height="14" fill="#009912"/><rect x="1102" y="156" width="14" height="14" fill="#009911"/><rect x="1114" y="156" width="14" height="14" fill="#009910"/><rect x="1126" y="156" width="14" height="14" fill="#00990f"/><rect x="1138" y="156" width="14" height="14" fill="#00990f"/><rect x="1150" y="156" width="14" height="14" fill="#07ff17"/><rect x="1162" y="156" width="14" height="14" fill="#25ff15"/><rect x="1174" y="156" width="14" height="14" fill="#46ff13"/><rect x="1186" y="156" width="14" height="14" fill="#69ff11"/><rect x="1198" y="156" width="14" height="14" fill="#8eff0f"/><rect x="1210" y="156" width="14" height="14" fill="#b7ff0c"/><rect x="1222" y="156" width="14" height="14" fill="#e3ff0a"/><rect x="1234" y="156" width="14" height="14" fill="#ffec06"/><rect x="1246" y="156" width="14" height="14" fill="#ffc703"/><rect x="1258" y="156" width="14" height="14" fill="#ffa900"/><rect x="1270" y="156" width="14" height="14" fill="#995700"/><rect x="1282" y="156" width="14" height="14" fill="#994b00"/><rect x="1294" y="156" width="14" height="14" fill="#994200"/><rect x="1306" y="156" width="14" height="14" fill="#993900"/><rect x="1318" y="156" width="14" height="14" fill="#993200"/><rect x="1330" y="156" width="14" height="14" fill="#992c00"/><rect x="1342" y="156" width="14" height="14" fill="#992600"/><rect x="1354" y="156" width="14" height="14" fill="#992200"/><rect x="1366" y="156" width="14" height="14" fill="#991d00"/><rect x="1378" y="156" width="14" height="14" fill="#991900"/><rect x="1390" y="156" width="14" height="14" fill="#991600"/><rect x="1402" y="156" width="14" height="14" fill="#991300"/><rect x="1414" y="156" width="14" height="14" fill="#991000"/><rect x="1426" y="156" width="14" height="14" fill="#990d00"/><rect x="1438" y="156" width="14" height="14" fill="#990b00"/><rect x="1450" y="156" width="14" height="14" fill="#990900"/><rect x="1462" y="156" width="14" height="14" fill="#990700"/><rect x="1474" y="156" width="14" height="14" fill="#990500"/><rect x="1486" y="156" width="14" height="14" fill="#990300"/><rect x="1018" y="168" width="14" height="14" fill="#009923"/><rect x="1030" y="168" width="14" height="14" fill="#009923"/><rect x="1042" y="168" width="14" height="14" fill="#009922"/><rect x="1054" y="168" width="14" height="14" fill="#009922"/><rect x="1066" y="168" width="14" height="14" fill="#009922"/><rect x="1078" y="168" width="14" height="14" fill="#009921"/><rect x="1090" y="168" width="14" height="14" fill="#009921"/><rect x="1102" y="168" width="14" height="14" fill="#009921"/><rect x="1114" y="168" width="14" height="14" fill="#009920"/><rect x="1126" y="168" width="14" height="14" fill="#009920"/><rect x="1138" y="168" width="14" height="14" fill="#00991f"/><rect x="1150" y="168" width="14" height="14" fill="#02ff34"/><rect x="1162" y="168" width="14" height="14" fill="#21ff33"/><rect x="1174" y="168" width="14" height="14" fill="#43ff32"/><rect x="1186" y="168" width="14" height="14" fill="#67ff31"/><rect x="1198" y="168" width="14" height="14" fill="#8eff30"/><rect x="1210" y="168" width="14" height="14" fill="#b8ff2f"/><rect x="1222" y="168" width="14" height="14" fill="#e6ff2d"/><rect x="1234" y="168" width="14" height="14" fill="#ffe728"/><rect x="1246" y="168" width="14" height="14" fill="#ffc220"/><rect x="1258" y="168" width="14" height="14" fill="#ffa41a"/><rect x="1270" y="168" width="14" height="14" fill="#ff8d15"/><rect x="1282" y="168" width="14" height="14" fill="#ff7911"/><rect x="1294" y="168" width="14" height="14" fill="#ff690e"/><rect x="1306" y="168" width="14" height="14" fill="#ff5b0b"/><rect x="1318" y="168" width="14" height="14" fill="#ff5009"/><rect x="1330" y="168" width="14" height="14" fill="#ff4507"/><rect x="1342" y="168" width="14" height="14" fill="#ff3c05"/><rect x="1354" y="168" width="14" height="14" fill="#ff3503"/><rect x="1366" y="168" width="14" height="14" fill="#ff2e02"/><rect x="1378" y="168" width="14" height="14" fill="#ff2701"/><rect x="1390" y="168" width="14" height="14" fill="#991400"/><rect x="1402" y="168" width="14" height="14" fill="#991100"/><rect x="1414" y="168" width="14" height="14" fill="#990e00"/><rect x="1426" y="168" width="14" height="14" fill="#990c00"/><rect x="1438" y="168" width="14" height="14" fill="#990900"/><rect x="1450" y="168" width="14" height="14" fill="#990700"/><rect x="1462" y="168" width="14" height="14" fill="#990500"/><rect x="1474" y="168" width="14" height="14" fill="#990300"/><rect x="1486" y="168" width="14" height="14" fill="#990200"/><rect x="1498" y="168" width="14" height="14" fill="#990000"/><rect x="1510" y="168" width="14" height="14" fill="#990000"/><rect x="1522" y="168" width="14" height="14" fill="#990000"/><rect x="1534" y="168" width="14" height="14" fill="#990000"/><rect x="1546" y="168" width="14" height="14" fill="#990000"/><rect x="1558" y="168" width="14" height="14" fill="#990000"/><rect x="1570" y="168" width="14" height="14" fill="#990000"/><rect x="1582" y="168" width="14" height="14" fill="#990000"/><rect x="1018" y="180" width="14" height="14" fill="#009930"/><rect x="1030" y="180" width="14" height="14" fill="#009930"/><rect x="1042" y="180" width="14" height="14" fill="#009930"/><rect x="1054" y="180" width="14" height="14" fill="#009931"/><rect x="1066" y="180" width="14" height="14" fill="#009931"/><rect x="1078" y="180" width="14" height="14" fill="#009931"/><rect x="1090" y="180" width="14" height="14" fill="#009931"/><rect x="1102" y="180" width="14" height="14" fill="#009931"/><rect x="1114" y="180" width="14" height="14" fill="#009931"/><rect x="1126" y="180" width="14" height="14" fill="#009931"/><rect x="1138" y="180" width="14" height="14" fill="#009931"/><rect x="1150" y="180" width="14" height="14" fill="#009931"/><rect x="1162" y="180" width="14" height="14" fill="#1dff53"/><rect x="1174" y="180" width="14" height="14" fill="#40ff53"/><rect x="1186" y="180" width="14" height="14" fill="#65ff53"/><rect x="1198" y="180" width="14" height="14" fill="#8eff54"/><rect x="1210" y="180" width="14" height="14" fill="#baff54"/><rect x="1222" y="180" width="14" height="14" fill="#eaff54"/><rect x="1234" y="180" width="14" height="14" fill="#ffe24b"/><rect x="1246" y="180" width="14" height="14" fill="#ffbc3f"/><rect x="1258" y="180" width="14" height="14" fill="#ff9f35"/><rect x="1270" y="180" width="14" height="14" fill="#ff882e"/><rect x="1282" y="180" width="14" height="14" fill="#ff7427"/><rect x="1294" y="180" width="14" height="14" fill="#ff6422"/><rect x="1306" y="180" width="14" height="14" fill="#ff571e"/><rect x="1318" y="180" width="14" height="14" fill="#ff4b1a"/><rect x="1330" y="180" width="14" height="14" fill="#ff4117"/><rect x="1342" y="180" width="14" height="14" fill="#ff3914"/><rect x="1354" y="180" width="14" height="14" fill="#ff3111"/><rect x="1366" y="180" width="14" height="14" fill="#ff2a0f"/><rect x="1378" y="180" width="14" height="14" fill="#ff240d"/><rect x="1390" y="180" width="14" height="14" fill="#ff1e0b"/><rect x="1402" y="180" width="14" height="14" fill="#ff190a"/><rect x="1414" y="180" width="14" height="14" fill="#ff1508"/><rect x="1426" y="180" width="14" height="14" fill="#ff1107"/><rect x="1438" y="180" width="14" height="14" fill="#ff0d06"/><rect x="1450" y="180" width="14" height="14" fill="#ff0905"/><rect x="1462" y="180" width="14" height="14" fill="#ff0603"/><rect x="1474" y="180" width="14" height="14" fill="#ff0302"/><rect x="1486" y="180" width="14" height="14" fill="#ff0002"/><rect x="1498" y="180" width="14" height="14" fill="#990000"/><rect x="1510" y="180" width="14" height="14" fill="#990000"/><rect x="1522" y="180" width="14" height="14" fill="#990000"/><rect x="1534" y="180" width="14" height="14" fill="#990000"/><rect x="1546" y="180" width="14" height="14" fill="#990000"/><rect x="1558" y="180" width="14" height="14" fill="#990000"/><rect x="1570" y="180" width="14" height="14" fill="#990000"/><rect x="1582" y="180" width="14" height="14" fill="#990000"/><rect x="1594" y="180" width="14" height="14" fill="#990000"/><rect x="1606" y="180" width="14" height="14" fill="#990000"/><rect x="1618" y="180" width="14" height="14" fill="#990000"/><rect x="1630" y="180" width="14" height="14" fill="#990000"/><rect x="1642" y="180" width="14" height="14" fill="#990000"/><rect x="1654" y="180" width="14" height="14" fill="#990000"/><rect x="1018" y="192" width="14" height="14" fill="#00993e"/><rect x="1030" y="192" width="14" height="14" fill="#00993f"/><rect x="1042" y="192" width="14" height="14" fill="#00993f"/><rect x="1054" y="192" width="14" height="14" fill="#009940"/><rect x="1066" y="192" width="14" height="14" fill="#009940"/><rect x="1078" y="192" width="14" height="14" fill="#009941"/><rect x="1090" y="192" width="14" height="14" fill="#009942"/><rect x="1102" y="192" width="14" height="14" fill="#009942"/><rect x="1114" y="192" width="14" height="14" fill="#009943"/><rect x="1126" y="192" width="14" height="14" fill="#009944"/><rect x="1138" y="192" width="14" height="14" fill="#009944"/><rect x="1150" y="192" width="14" height="14" fill="#009945"/><rect x="1162" y="192" width="14" height="14" fill="#19ff75"/><rect x="1174" y="192" width="14" height="14" fill="#3dff77"/><rect x="1186" y="192" width="14" height="14" fill="#64ff79"/><rect x="1198" y="192" width="14" height="14" fill="#8eff7a"/><rect x="1210" y="192" width="14" height="14" fill="#bcff7d"/><rect x="1222" y="192" width="14" height="14" fill="#eeff7f"/><rect x="1234" y="192" width="14" height="14" fill="#ffdd70"/><rect x="1246" y="192" width="14" height="14" fill="#ffb75f"/><rect x="1258" y="192" width="14" height="14" fill="#ff9a51"/><rect x="1270" y="192" width="14" height="14" fill="#ff8247"/><rect x="1282" y="192" width="14" height="14" fill="#ff6f3e"/><rect x="1294" y="192" width="14" height="14" fill="#ff6037"/><rect x="1306" y="192" width="14" height="14" fill="#ff5231"/><rect x="1318" y="192" width="14" height="14" fill="#ff472c"/><rect x="1330" y="192" width="14" height="14" fill="#ff3d27"/><rect x="1342" y="192" width="14" height="14" fill="#ff3523"/><rect x="1354" y="192" width="14" height="14" fill="#ff2d20"/><rect x="1366" y="192" width="14" height="14" fill="#ff261d"/><rect x="1378" y="192" width="14" height="14" fill="#ff201a"/><rect x="1390" y="192" width="14" height="14" fill="#ff1b17"/><rect x="1402" y="192" width="14" height="14" fill="#ff1615"/><rect x="1414" y="192" width="14" height="14" fill="#ff1213"/><rect x="1426" y="192" width="14" height="14" fill="#ff0e11"/><rect x="1438" y="192" width="14" height="14" fill="#ff0a10"/><rect x="1450" y="192" width="14" height="14" fill="#ff070e"/><rect x="1462" y="192" width="14" height="14" fill="#ff030d"/><rect x="1474" y="192" width="14" height="14" fill="#ff010b"/><rect x="1486" y="192" width="14" height="14" fill="#990006"/><rect x="1498" y="192" width="14" height="14" fill="#990005"/><rect x="1510" y="192" width="14" height="14" fill="#990005"/><rect x="1522" y="192" width="14" height="14" fill="#990004"/><rect x="1534" y="192" width="14" height="14" fill="#990003"/><rect x="1546" y="192" width="14" height="14" fill="#990003"/><rect x="1558" y="192" width="14" height="14" fill="#990002"/><rect x="1570" y="192" width="14" height="14" fill="#990002"/><rect x="1582" y="192" width="14" height="14" fill="#990001"/><rect x="1594" y="192" width="14" height="14" fill="#990001"/><rect x="1606" y="192" width="14" height="14" fill="#990001"/><rect x="1618" y="192" width="14" height="14" fill="#990000"/><rect x="1630" y="192" width="14" height="14" fill="#990000"/><rect x="1642" y="192" width="14" height="14" fill="#990000"/><rect x="1654" y="192" width="14" height="14" fill="#990000"/><rect x="1018" y="204" width="14" height="14" fill="#00994d"/><rect x="1030" y="204" width="14" height="14" fill="#00994e"/><rect x="1042" y="204" width="14" height="14" fill="#00994f"/><rect x="1054" y="204" width="14" height="14" fill="#009950"/><rect x="1066" y="204" width="14" height="14" fill="#009951"/><rect x="1078" y="204" width="14" height="14" fill="#009952"/><rect x="1090" y="204" width="14" height="14" fill="#009953"/><rect x="1102" y="204" width="14" height="14" fill="#009955"/><rect x="1114" y="204" width="14" height="14" fill="#009956"/><rect x="1126" y="204" width="14" height="14" fill="#009957"/><rect x="1138" y="204" width="14" height="14" fill="#009959"/><rect x="1150" y="204" width="14" height="14" fill="#00995b"/><rect x="1162" y="204" width="14" height="14" fill="#14ff9a"/><rect x="1174" y="204" width="14" height="14" fill="#3aff9d"/><rect x="1186" y="204" width="14" height="14" fill="#62ffa1"/><rect x="1198" y="204" width="14" height="14" fill="#8effa5"/><rect x="1210" y="204" width="14" height="14" fill="#beffa9"/><rect x="1222" y="204" width="14" height="14" fill="#f2ffad"/><rect x="1234" y="204" width="14" height="14" fill="#ffd897"/><rect x="1246" y="204" width="14" height="14" fill="#ffb180"/><rect x="1258" y="204" width="14" height="14" fill="#ff946f"/><rect x="1270" y="204" width="14" height="14" fill="#ff7d61"/><rect x="1282" y="204" width="14" height="14" fill="#ff6a55"/><rect x="1294" y="204" width="14" height="14" fill="#ff5b4c"/><rect x="1306" y="204" width="14" height="14" fill="#ff4e44"/><rect x="1318" y="204" width="14" height="14" fill="#ff433e"/><rect x="1330" y="204" width="14" height="14" fill="#ff3938"/><rect x="1342" y="204" width="14" height="14" fill="#ff3033"/><rect x="1354" y="204" width="14" height="14" fill="#ff292e"/><rect x="1366" y="204" width="14" height="14" fill="#ff232a"/><rect x="1378" y="204" width="14" height="14" fill="#ff1d27"/><rect x="1390" y="204" width="14" height="14" fill="#ff1724"/><rect x="1402" y="204" width="14" height="14" fill="#ff1321"/><rect x="1414" y="204" width="14" height="14" fill="#ff0e1e"/><rect x="1426" y="204" width="14" height="14" fill="#ff0b1c"/><rect x="1438" y="204" width="14" height="14" fill="#ff071a"/><rect x="1450" y="204" width="14" height="14" fill="#ff0418"/><rect x="1462" y="204" width="14" height="14" fill="#ff0116"/><rect x="1474" y="204" width="14" height="14" fill="#99000c"/><rect x="1486" y="204" width="14" height="14" fill="#99000b"/><rect x="1498" y="204" width="14" height="14" fill="#99000a"/><rect x="1510" y="204" width="14" height="14" fill="#990009"/><rect x="1522" y="204" width="14" height="14" fill="#990009"/><rect x="1534" y="204" width="14" height="14" fill="#990008"/><rect x="1546" y="204" width="14" height="14" fill="#990007"/><rect x="1558" y="204" width="14" height="14" fill="#990007"/><rect x="1570" y="204" width="14" height="14" fill="#990006"/><rect x="1582" y="204" width="14" height="14" fill="#990006"/><rect x="1594" y="204" width="14" height="14" fill="#990005"/><rect x="1606" y="204" width="14" height="14" fill="#990004"/><rect x="1618" y="204" width="14" height="14" fill="#990004"/><rect x="1630" y="204" width="14" height="14" fill="#990004"/><rect x="1642" y="204" width="14" height="14" fill="#990003"/><rect x="1654" y="204" width="14" height="14" fill="#990003"/><rect x="1018" y="216" width="14" height="14" fill="#00995d"/><rect x="1030" y="216" width="14" height="14" fill="#00995e"/><rect x="1042" y="216" width="14" height="14" fill="#009960"/><rect x="1054" y="216" width="14" height="14" fill="#009961"/><rect x="1066" y="216" width="14" height="14" fill="#009963"/><rect x="1078" y="216" width="14" height="14" fill="#009965"/><rect x="1090" y="216" width="14" height="14" fill="#009966"/><rect x="1102" y="216" width="14" height="14" fill="#009968"/><rect x="1114" y="216" width="14" height="14" fill="#00996a"/><rect x="1126" y="216" width="14" height="14" fill="#00996d"/><rect x="1138" y="216" width="14" height="14" fill="#00996f"/><rect x="1150" y="216" width="14" height="14" fill="#009972"/><rect x="1162" y="216" width="14" height="14" fill="#0fffc2"/><rect x="1174" y="216" width="14" height="14" fill="#36ffc7"/><rect x="1186" y="216" width="14" height="14" fill="#60ffcd"/><rect x="1198" y="216" width="14" height="14" fill="#8dffd3"/><rect x="1210" y="216" width="14" height="14" fill="#c0ffd9"/><rect x="1222" y="216" width="14" height="14" fill="#f7ffe1"/><rect x="1234" y="216" width="14" height="14" fill="#ffd2c0"/><rect x="1246" y="216" width="14" height="14" fill="#ffaca3"/><rect x="1258" y="216" width="14" height="14" fill="#ff8f8d"/><rect x="1270" y="216" width="14" height="14" fill="#ff787c"/><rect x="1282" y="216" width="14" height="14" fill="#ff656e"/><rect x="1294" y="216" width="14" height="14" fill="#ff5662"/><rect x="1306" y="216" width="14" height="14" fill="#ff4958"/><rect x="1318" y="216" width="14" height="14" fill="#ff3e50"/><rect x="1330" y="216" width="14" height="14" fill="#ff3549"/><rect x="1342" y="216" width="14" height="14" fill="#ff2c43"/><rect x="1354" y="216" width="14" height="14" fill="#ff253d"/><rect x="1366" y="216" width="14" height="14" fill="#ff1f39"/><rect x="1378" y="216" width="14" height="14" fill="#ff1934"/><rect x="1390" y="216" width="14" height="14" fill="#ff1430"/><rect x="1402" y="216" width="14" height="14" fill="#ff0f2d"/><rect x="1414" y="216" width="14" height="14" fill="#ff0b2a"/><rect x="1426" y="216" width="14" height="14" fill="#ff0727"/><rect x="1438" y="216" width="14" height="14" fill="#ff0424"/><rect x="1450" y="216" width="14" height="14" fill="#ff0122"/><rect x="1462" y="216" width="14" height="14" fill="#990013"/><rect x="1474" y="216" width="14" height="14" fill="#990012"/><rect x="1486" y="216" width="14" height="14" fill="#990010"/><rect x="1498" y="216" width="14" height="14" fill="#99000f"/><rect x="1510" y="216" width="14" height="14" fill="#99000e"/><rect x="1522" y="216" width="14" height="14" fill="#99000d"/><rect x="1534" y="216" width="14" height="14" fill="#99000d"/><rect x="1546" y="216" width="14" height="14" fill="#99000c"/><rect x="1558" y="216" width="14" height="14" fill="#99000b"/><rect x="1570" y="216" width="14" height="14" fill="#99000a"/><rect x="1582" y="216" width="14" height="14" fill="#99000a"/><rect x="1594" y="216" width="14" height="14" fill="#990009"/><rect x="1606" y="216" width="14" height="14" fill="#990008"/><rect x="1618" y="216" width="14" height="14" fill="#990008"/><rect x="1630" y="216" width="14" height="14" fill="#990007"/><rect x="1642" y="216" width="14" height="14" fill="#990007"/><rect x="1654" y="216" width="14" height="14" fill="#990006"/><rect x="1018" y="228" width="14" height="14" fill="#00996e"/><rect x="1030" y="228" width="14" height="14" fill="#009970"/><rect x="1042" y="228" width="14" height="14" fill="#009971"/><rect x="1054" y="228" width="14" height="14" fill="#009974"/><rect x="1066" y="228" width="14" height="14" fill="#009976"/><rect x="1078" y="228" width="14" height="14" fill="#009978"/><rect x="1090" y="228" width="14" height="14" fill="#00997b"/><rect x="1102" y="228" width="14" height="14" fill="#00997d"/><rect x="1114" y="228" width="14" height="14" fill="#009980"/><rect x="1126" y="228" width="14" height="14" fill="#009983"/><rect x="1138" y="228" width="14" height="14" fill="#009987"/><rect x="1150" y="228" width="14" height="14" fill="#00998a"/><rect x="1162" y="228" width="14" height="14" fill="#0affee"/><rect x="1174" y="228" width="14" height="14" fill="#32fff5"/><rect x="1186" y="228" width="14" height="14" fill="#5dfffd"/><rect x="1198" y="228" width="14" height="14" fill="#8af8ff"/><rect x="1210" y="228" width="14" height="14" fill="#b6efff"/><rect x="1222" y="228" width="14" height="14" fill="#e4e6ff"/><rect x="1234" y="228" width="14" height="14" fill="#ffcceb"/><rect x="1246" y="228" width="14" height="14" fill="#ffa6c7"/><rect x="1258" y="228" width="14" height="14" fill="#ff89ad"/><rect x="1270" y="228" width="14" height="14" fill="#ff7297"/><rect x="1282" y="228" width="14" height="14" fill="#ff6087"/><rect x="1294" y="228" width="14" height="14" fill="#ff5179"/><rect x="1306" y="228" width="14" height="14" fill="#ff446d"/><rect x="1318" y="228" width="14" height="14" fill="#ff3963"/><rect x="1330" y="228" width="14" height="14" fill="#ff305a"/><rect x="1342" y="228" width="14" height="14" fill="#ff2853"/><rect x="1354" y="228" width="14" height="14" fill="#ff214d"/><rect x="1366" y="228" width="14" height="14" fill="#ff1b47"/><rect x="1378" y="228" width="14" height="14" fill="#ff1542"/><rect x="1390" y="228" width="14" height="14" fill="#ff103d"/><rect x="1402" y="228" width="14" height="14" fill="#ff0c39"/><rect x="1414" y="228" width="14" height="14" fill="#ff0835"/><rect x="1426" y="228" width="14" height="14" fill="#ff0432"/><rect x="1438" y="228" width="14" height="14" fill="#ff012f"/><rect x="1450" y="228" width="14" height="14" fill="#99001a"/><rect x="1462" y="228" width="14" height="14" fill="#990019"/><rect x="1474" y="228" width="14" height="14" fill="#990017"/><rect x="1486" y="228" width="14" height="14" fill="#990016"/><rect x="1498" y="228" width="14" height="14" fill="#990014"/><rect x="1510" y="228" width="14" height="14" fill="#990013"/><rect x="1522" y="228" width="14" height="14" fill="#990012"/><rect x="1534" y="228" width="14" height="14" fill="#990011"/><rect x="1546" y="228" width="14" height="14" fill="#990010"/><rect x="1558" y="228" width="14" height="14" fill="#99000f"/><rect x="1570" y="228" width="14" height="14" fill="#99000e"/><rect x="1582" y="228" width="14" height="14" fill="#99000e"/><rect x="1594" y="228" width="14" height="14" fill="#99000d"/><rect x="1606" y="228" width="14" height="14" fill="#99000c"/><rect x="1618" y="228" width="14" height="14" fill="#99000c"/><rect x="1630" y="228" width="14" height="14" fill="#99000b"/><rect x="1642" y="228" width="14" height="14" fill="#99000a"/><rect x="1654" y="228" width="14" height="14" fill="#99000a"/><rect x="1018" y="240" width="14" height="14" fill="#00997f"/><rect x="1030" y="240" width="14" height="14" fill="#009982"/><rect x="1042" y="240" width="14" height="14" fill="#009984"/><rect x="1054" y="240" width="14" height="14" fill="#009987"/><rect x="1066" y="240" width="14" height="14" fill="#00998a"/><rect x="1078" y="240" width="14" height="14" fill="#00998d"/><rect x="1090" y="240" width="14" height="14" fill="#009990"/><rect x="1102" y="240" width="14" height="14" fill="#009994"/><rect x="1114" y="240" width="14" height="14" fill="#009998"/><rect x="1126" y="240" width="14" height="14" fill="#009599"/><rect x="1138" y="240" width="14" height="14" fill="#009199"/><rect x="1150" y="240" width="14" height="14" fill="#008d99"/><rect x="1162" y="240" width="14" height="14" fill="#03e3ff"/><rect x="1174" y="240" width="14" height="14" fill="#27dcff"/><rect x="1186" y="240" width="14" height="14" fill="#4cd4ff"/><rect x="1198" y="240" width="14" height="14" fill="#71ccff"/><rect x="1210" y="240" width="14" height="14" fill="#98c4ff"/><rect x="1222" y="240" width="14" height="14" fill="#bfbcff"/><rect x="1234" y="240" width="14" height="14" fill="#e7b3ff"/><rect x="1246" y="240" width="14" height="14" fill="#ff9fed"/><rect x="1258" y="240" width="14" height="14" fill="#ff82cd"/><rect x="1270" y="240" width="14" height="14" fill="#ff6cb4"/><rect x="1282" y="240" width="14" height="14" fill="#ff5aa0"/><rect x="1294" y="240" width="14" height="14" fill="#ff4b90"/><rect x="1306" y="240" width="14" height="14" fill="#ff3f82"/><rect x="1318" y="240" width="14" height="14" fill="#ff3476"/><rect x="1330" y="240" width="14" height="14" fill="#ff2b6c"/><rect x="1342" y="240" width="14" height="14" fill="#ff2464"/><rect x="1354" y="240" width="14" height="14" fill="#ff1d5c"/><rect x="1366" y="240" width="14" height="14" fill="#ff1755"/><rect x="1378" y="240" width="14" height="14" fill="#ff124f"/><rect x="1390" y="240" width="14" height="14" fill="#ff0d4a"/><rect x="1402" y="240" width="14" height="14" fill="#ff0845"/><rect x="1414" y="240" width="14" height="14" fill="#ff0541"/><rect x="1426" y="240" width="14" height="14" fill="#ff013d"/><rect x="1438" y="240" width="14" height="14" fill="#990022"/><rect x="1450" y="240" width="14" height="14" fill="#990020"/><rect x="1462" y="240" width="14" height="14" fill="#99001e"/><rect x="1474" y="240" width="14" height="14" fill="#99001d"/><rect x="1486" y="240" width="14" height="14" fill="#99001b"/><rect x="1498" y="240" width="14" height="14" fill="#99001a"/><rect x="1510" y="240" width="14" height="14" fill="#990018"/><rect x="1522" y="240" width="14" height="14" fill="#990017"/><rect x="1534" y="240" width="14" height="14" fill="#990016"/><rect x="1546" y="240" width="14" height="14" fill="#990015"/><rect x="1558" y="240" width="14" height="14" fill="#990014"/><rect x="1570" y="240" width="14" height="14" fill="#990013"/><rect x="1582" y="240" width="14" height="14" fill="#990012"/><rect x="1594" y="240" width="14" height="14" fill="#990011"/><rect x="1606" y="240" width="14" height="14" fill="#990010"/><rect x="1618" y="240" width="14" height="14" fill="#99000f"/><rect x="1630" y="240" width="14" height="14" fill="#99000f"/><rect x="1642" y="240" width="14" height="14" fill="#99000e"/><rect x="1030" y="252" width="14" height="14" fill="#009995"/><rect x="1042" y="252" width="14" height="14" fill="#009998"/><rect x="1054" y="252" width="14" height="14" fill="#009699"/><rect x="1066" y="252" width="14" height="14" fill="#009299"/><rect x="1078" y="252" width="14" height="14" fill="#008e99"/><rect x="1090" y="252" width="14" height="14" fill="#008b99"/><rect x="1102" y="252" width="14" height="14" fill="#008799"/><rect x="1114" y="252" width="14" height="14" fill="#008399"/><rect x="1126" y="252" width="14" height="14" fill="#007f99"/><rect x="1138" y="252" width="14" height="14" fill="#007b99"/><rect x="1150" y="252" width="14" height="14" fill="#007799"/><rect x="1162" y="252" width="14" height="14" fill="#007399"/><rect x="1174" y="252" width="14" height="14" fill="#1db9ff"/><rect x="1186" y="252" width="14" height="14" fill="#3eb2ff"/><rect x="1198" y="252" width="14" height="14" fill="#5fabff"/><rect x="1210" y="252" width="14" height="14" fill="#80a4ff"/><rect x="1222" y="252" width="14" height="14" fill="#a39cff"/><rect x="1234" y="252" width="14" height="14" fill="#c694ff"/><rect x="1246" y="252" width="14" height="14" fill="#ea8cff"/><rect x="1258" y="252" width="14" height="14" fill="#ff7cef"/><rect x="1270" y="252" width="14" height="14" fill="#ff66d2"/><rect x="1282" y="252" width="14" height="14" fill="#ff54bb"/><rect x="1294" y="252" width="14" height="14" fill="#ff46a8"/><rect x="1306" y="252" width="14" height="14" fill="#ff3a98"/><rect x="1318" y="252" width="14" height="14" fill="#ff308a"/><rect x="1330" y="252" width="14" height="14" fill="#ff277f"/><rect x="1342" y="252" width="14" height="14" fill="#ff1f75"/><rect x="1354" y="252" width="14" height="14" fill="#ff196c"/><rect x="1366" y="252" width="14" height="14" fill="#ff1364"/><rect x="1378" y="252" width="14" height="14" fill="#ff0e5d"/><rect x="1390" y="252" width="14" height="14" fill="#ff0957"/><rect x="1402" y="252" width="14" height="14" fill="#ff0552"/><rect x="1414" y="252" width="14" height="14" fill="#ff014d"/><rect x="1426" y="252" width="14" height="14" fill="#99002b"/><rect x="1438" y="252" width="14" height="14" fill="#990029"/><rect x="1450" y="252" width="14" height="14" fill="#990026"/><rect x="1462" y="252" width="14" height="14" fill="#990024"/><rect x="1474" y="252" width="14" height="14" fill="#990022"/><rect x="1486" y="252" width="14" height="14" fill="#990021"/><rect x="1498" y="252" width="14" height="14" fill="#99001f"/><rect x="1510" y="252" width="14" height="14" fill="#99001d"/><rect x="1522" y="252" width="14" height="14" fill="#99001c"/><rect x="1534" y="252" width="14" height="14" fill="#99001b"/><rect x="1546" y="252" width="14" height="14" fill="#990019"/><rect x="1558" y="252" width="14" height="14" fill="#990018"/><rect x="1570" y="252" width="14" height="14" fill="#990017"/><rect x="1582" y="252" width="14" height="14" fill="#990016"/><rect x="1594" y="252" width="14" height="14" fill="#990015"/><rect x="1606" y="252" width="14" height="14" fill="#990014"/><rect x="1618" y="252" width="14" height="14" fill="#990013"/><rect x="1630" y="252" width="14" height="14" fill="#990012"/><rect x="1030" y="264" width="14" height="14" fill="#008999"/><rect x="1042" y="264" width="14" height="14" fill="#008699"/><rect x="1054" y="264" width="14" height="14" fill="#008399"/><rect x="1066" y="264" width="14" height="14" fill="#008099"/><rect x="1078" y="264" width="14" height="14" fill="#007c99"/><rect x="1090" y="264" width="14" height="14" fill="#007999"/><rect x="1102" y="264" width="14" height="14" fill="#007599"/><rect x="1114" y="264" width="14" height="14" fill="#007299"/><rect x="1126" y="264" width="14" height="14" fill="#006e99"/><rect x="1138" y="264" width="14" height="14" fill="#006a99"/><rect x="1150" y="264" width="14" height="14" fill="#006799"/><rect x="1162" y="264" width="14" height="14" fill="#006399"/><rect x="1174" y="264" width="14" height="14" fill="#169eff"/><rect x="1186" y="264" width="14" height="14" fill="#3398ff"/><rect x="1198" y="264" width="14" height="14" fill="#5091ff"/><rect x="1210" y="264" width="14" height="14" fill="#6e8aff"/><rect x="1222" y="264" width="14" height="14" fill="#8c83ff"/><rect x="1234" y="264" width="14" height="14" fill="#ab7bff"/><rect x="1246" y="264" width="14" height="14" fill="#cb74ff"/><rect x="1258" y="264" width="14" height="14" fill="#ec6dff"/><rect x="1270" y="264" width="14" height="14" fill="#ff60f1"/><rect x="1282" y="264" width="14" height="14" fill="#ff4ed6"/><rect x="1294" y="264" width="14" height="14" fill="#ff40c0"/><rect x="1306" y="264" width="14" height="14" fill="#ff34ae"/><rect x="1318" y="264" width="14" height="14" fill="#ff2a9f"/><rect x="1330" y="264" width="14" height="14" fill="#ff2291"/><rect x="1342" y="264" width="14" height="14" fill="#ff1b86"/><rect x="1354" y="264" width="14" height="14" fill="#ff147c"/><rect x="1366" y="264" width="14" height="14" fill="#ff0f73"/><rect x="1378" y="264" width="14" height="14" fill="#ff0a6c"/><rect x="1390" y="264" width="14" height="14" fill="#ff0565"/><rect x="1402" y="264" width="14" height="14" fill="#ff015e"/><rect x="1414" y="264" width="14" height="14" fill="#990035"/><rect x="1426" y="264" width="14" height="14" fill="#990032"/><rect x="1438" y="264" width="14" height="14" fill="#99002f"/><rect x="1450" y="264" width="14" height="14" fill="#99002d"/><rect x="1462" y="264" width="14" height="14" fill="#99002a"/><rect x="1474" y="264" width="14" height="14" fill="#990028"/><rect x="1486" y="264" width="14" height="14" fill="#990026"/><rect x="1498" y="264" width="14" height="14" fill="#990024"/><rect x="1510" y="264" width="14" height="14" fill="#990023"/><rect x="1522" y="264" width="14" height="14" fill="#990021"/><rect x="1534" y="264" width="14" height="14" fill="#99001f"/><rect x="1546" y="264" width="14" height="14" fill="#99001e"/><rect x="1558" y="264" width="14" height="14" fill="#99001d"/><rect x="1570" y="264" width="14" height="14" fill="#99001b"/><rect x="1582" y="264" width="14" height="14" fill="#99001a"/><rect x="1594" y="264" width="14" height="14" fill="#990019"/><rect x="1606" y="264" width="14" height="14" fill="#990018"/><rect x="1618" y="264" width="14" height="14" fill="#990017"/><rect x="1030" y="276" width="14" height="14" fill="#007a99"/><rect x="1042" y="276" width="14" height="14" fill="#007799"/><rect x="1054" y="276" width="14" height="14" fill="#007499"/><rect x="1066" y="276" width="14" height="14" fill="#007099"/><rect x="1078" y="276" width="14" height="14" fill="#006d99"/><rect x="1090" y="276" width="14" height="14" fill="#006a99"/><rect x="1102" y="276" width="14" height="14" fill="#006799"/><rect x="1114" y="276" width="14" height="14" fill="#006399"/><rect x="1126" y="276" width="14" height="14" fill="#006099"/><rect x="1138" y="276" width="14" height="14" fill="#005c99"/><rect x="1150" y="276" width="14" height="14" fill="#005999"/><rect x="1162" y="276" width="14" height="14" fill="#005599"/><rect x="1174" y="276" width="14" height="14" fill="#1088ff"/><rect x="1186" y="276" width="14" height="14" fill="#2982ff"/><rect x="1198" y="276" width="14" height="14" fill="#447bff"/><rect x="1210" y="276" width="14" height="14" fill="#5f75ff"/><rect x="1222" y="276" width="14" height="14" fill="#7a6eff"/><rect x="1234" y="276" width="14" height="14" fill="#9668ff"/><rect x="1246" y="276" width="14" height="14" fill="#b361ff"/><rect x="1258" y="276" width="14" height="14" fill="#d05aff"/><rect x="1270" y="276" width="14" height="14" fill="#ed53ff"/><rect x="1282" y="276" width="14" height="14" fill="#ff48f3"/><rect x="1294" y="276" width="14" height="14" fill="#ff3ada"/><rect x="1306" y="276" width="14" height="14" fill="#ff2fc5"/><rect x="1318" y="276" width="14" height="14" fill="#ff25b4"/><rect x="1330" y="276" width="14" height="14" fill="#ff1da5"/><rect x="1342" y="276" width="14" height="14" fill="#ff1698"/><rect x="1354" y="276" width="14" height="14" fill="#ff108d"/><rect x="1366" y="276" width="14" height="14" fill="#ff0b83"/><rect x="1378" y="276" width="14" height="14" fill="#ff067a"/><rect x="1390" y="276" width="14" height="14" fill="#ff0172"/><rect x="1402" y="276" width="14" height="14" fill="#990040"/><rect x="1414" y="276" width="14" height="14" fill="#99003c"/><rect x="1426" y="276" width="14" height="14" fill="#990039"/><rect x="1438" y="276" width="14" height="14" fill="#990036"/><rect x="1450" y="276" width="14" height="14" fill="#990033"/><rect x="1462" y="276" width="14" height="14" fill="#990030"/><rect x="1474" y="276" width="14" height="14" fill="#99002e"/><rect x="1486" y="276" width="14" height="14" fill="#99002c"/><rect x="1498" y="276" width="14" height="14" fill="#99002a"/><rect x="1510" y="276" width="14" height="14" fill="#990028"/><rect x="1522" y="276" width="14" height="14" fill="#990026"/><rect x="1534" y="276" width="14" height="14" fill="#990024"/><rect x="1546" y="276" width="14" height="14" fill="#990023"/><rect x="1558" y="276" width="14" height="14" fill="#990021"/><rect x="1570" y="276" width="14" height="14" fill="#990020"/><rect x="1582" y="276" width="14" height="14" fill="#99001e"/><rect x="1594" y="276" width="14" height="14" fill="#99001d"/><rect x="1606" y="276" width="14" height="14" fill="#99001c"/><rect x="1042" y="288" width="14" height="14" fill="#006a99"/><rect x="1054" y="288" width="14" height="14" fill="#006799"/><rect x="1066" y="288" width="14" height="14" fill="#006499"/><rect x="1078" y="288" width="14" height="14" fill="#006199"/><rect x="1090" y="288" width="14" height="14" fill="#005e99"/><rect x="1102" y="288" width="14" height="14" fill="#005a99"/><rect x="1114" y="288" width="14" height="14" fill="#005799"/><rect x="1126" y="288" width="14" height="14" fill="#005499"/><rect x="1138" y="288" width="14" height="14" fill="#005199"/><rect x="1150" y="288" width="14" height="14" fill="#004d99"/><rect x="1162" y="288" width="14" height="14" fill="#004a99"/><rect x="1174" y="288" width="14" height="14" fill="#0a76ff"/><rect x="1186" y="288" width="14" height="14" fill="#2270ff"/><rect x="1198" y="288" width="14" height="14" fill="#3a6aff"/><rect x="1210" y="288" width="14" height="14" fill="#5364ff"/><rect x="1222" y="288" width="14" height="14" fill="#6b5eff"/><rect x="1234" y="288" width="14" height="14" fill="#8558ff"/><rect x="1246" y="288" width="14" height="14" fill="#9e51ff"/><rect x="1258" y="288" width="14" height="14" fill="#b94bff"/><rect x="1270" y="288" width="14" height="14" fill="#d344ff"/><rect x="1282" y="288" width="14" height="14" fill="#ee3dff"/><rect x="1294" y="288" width="14" height="14" fill="#ff34f4"/><rect x="1306" y="288" width="14" height="14" fill="#ff29dc"/><rect x="1318" y="288" width="14" height="14" fill="#ff20c9"/><rect x="1330" y="288" width="14" height="14" fill="#ff18b8"/><rect x="1342" y="288" width="14" height="14" fill="#ff11aa"/><rect x="1354" y="288" width="14" height="14" fill="#ff0b9e"/><rect x="1366" y="288" width="14" height="14" fill="#ff0693"/><rect x="1378" y="288" width="14" height="14" fill="#ff0289"/><rect x="1390" y="288" width="14" height="14" fill="#99004d"/><rect x="1402" y="288" width="14" height="14" fill="#990048"/><rect x="1414" y="288" width="14" height="14" fill="#990044"/><rect x="1426" y="288" width="14" height="14" fill="#990040"/><rect x="1438" y="288" width="14" height="14" fill="#99003d"/><rect x="1450" y="288" width="14" height="14" fill="#990039"/><rect x="1462" y="288" width="14" height="14" fill="#990037"/><rect x="1474" y="288" width="14" height="14" fill="#990034"/><rect x="1486" y="288" width="14" height="14" fill="#990031"/><rect x="1498" y="288" width="14" height="14" fill="#99002f"/><rect x="1510" y="288" width="14" height="14" fill="#99002d"/><rect x="1522" y="288" width="14" height="14" fill="#99002b"/><rect x="1534" y="288" width="14" height="14" fill="#990029"/><rect x="1546" y="288" width="14" height="14" fill="#990027"/><rect x="1558" y="288" width="14" height="14" fill="#990026"/><rect x="1570" y="288" width="14" height="14" fill="#990024"/><rect x="1582" y="288" width="14" height="14" fill="#990023"/><rect x="1594" y="288" width="14" height="14" fill="#990021"/><rect x="1042" y="300" width="14" height="14" fill="#005f99"/><rect x="1054" y="300" width="14" height="14" fill="#005c99"/><rect x="1066" y="300" width="14" height="14" fill="#005999"/><rect x="1078" y="300" width="14" height="14" fill="#005699"/><rect x="1090" y="300" width="14" height="14" fill="#005399"/><rect x="1102" y="300" width="14" height="14" fill="#005099"/><rect x="1114" y="300" width="14" height="14" fill="#004d99"/><rect x="1126" y="300" width="14" height="14" fill="#004a99"/><rect x="1138" y="300" width="14" height="14" fill="#004799"/><rect x="1150" y="300" width="14" height="14" fill="#004499"/><rect x="1162" y="300" width="14" height="14" fill="#004099"/><rect x="1174" y="300" width="14" height="14" fill="#0666ff"/><rect x="1186" y="300" width="14" height="14" fill="#1c61ff"/><rect x="1198" y="300" width="14" height="14" fill="#325bff"/><rect x="1210" y="300" width="14" height="14" fill="#4856ff"/><rect x="1222" y="300" width="14" height="14" fill="#5f50ff"/><rect x="1234" y="300" width="14" height="14" fill="#764aff"/><rect x="1246" y="300" width="14" height="14" fill="#8e44ff"/><rect x="1258" y="300" width="14" height="14" fill="#a63eff"/><rect x="1270" y="300" width="14" height="14" fill="#be38ff"/><rect x="1282" y="300" width="14" height="14" fill="#d632ff"/><rect x="1294" y="300" width="14" height="14" fill="#ef2bff"/><rect x="1306" y="300" width="14" height="14" fill="#ff23f5"/><rect x="1318" y="300" width="14" height="14" fill="#ff1bdf"/><rect x="1330" y="300" width="14" height="14" fill="#ff13cc"/><rect x="1342" y="300" width="14" height="14" fill="#ff0cbd"/><rect x="1354" y="300" width="14" height="14" fill="#ff07af"/><rect x="1366" y="300" width="14" height="14" fill="#ff02a3"/><rect x="1378" y="300" width="14" height="14" fill="#99005b"/><rect x="1390" y="300" width="14" height="14" fill="#990055"/><rect x="1402" y="300" width="14" height="14" fill="#990050"/><rect x="1414" y="300" width="14" height="14" fill="#99004b"/><rect x="1426" y="300" width="14" height="14" fill="#990047"/><rect x="1438" y="300" width="14" height="14" fill="#990043"/><rect x="1450" y="300" width="14" height="14" fill="#990040"/><rect x="1462" y="300" width="14" height="14" fill="#99003d"/><rect x="1474" y="300" width="14" height="14" fill="#99003a"/><rect x="1486" y="300" width="14" height="14" fill="#990037"/><rect x="1498" y="300" width="14" height="14" fill="#990035"/><rect x="1510" y="300" width="14" height="14" fill="#990032"/><rect x="1522" y="300" width="14" height="14" fill="#990030"/><rect x="1534" y="300" width="14" height="14" fill="#99002e"/><rect x="1546" y="300" width="14" height="14" fill="#99002c"/><rect x="1558" y="300" width="14" height="14" fill="#99002a"/><rect x="1570" y="300" width="14" height="14" fill="#990029"/><rect x="1582" y="300" width="14" height="14" fill="#990027"/><rect x="1594" y="300" width="14" height="14" fill="#990026"/><rect x="1054" y="312" width="14" height="14" fill="#005299"/><rect x="1066" y="312" width="14" height="14" fill="#004f99"/><rect x="1078" y="312" width="14" height="14" fill="#004d99"/><rect x="1090" y="312" width="14" height="14" fill="#004a99"/><rect x="1102" y="312" width="14" height="14" fill="#004799"/><rect x="1114" y="312" width="14" height="14" fill="#004499"/><rect x="1126" y="312" width="14" height="14" fill="#004199"/><rect x="1138" y="312" width="14" height="14" fill="#003e99"/><rect x="1150" y="312" width="14" height="14" fill="#003b99"/><rect x="1162" y="312" width="14" height="14" fill="#003899"/><rect x="1174" y="312" width="14" height="14" fill="#0259ff"/><rect x="1186" y="312" width="14" height="14" fill="#1654ff"/><rect x="1198" y="312" width="14" height="14" fill="#2b4fff"/><rect x="1210" y="312" width="14" height="14" fill="#4049ff"/><rect x="1222" y="312" width="14" height="14" fill="#5544ff"/><rect x="1234" y="312" width="14" height="14" fill="#6a3eff"/><rect x="1246" y="312" width="14" height="14" fill="#7f39ff"/><rect x="1258" y="312" width="14" height="14" fill="#9533ff"/><rect x="1270" y="312" width="14" height="14" fill="#ac2dff"/><rect x="1282" y="312" width="14" height="14" fill="#c228ff"/><rect x="1294" y="312" width="14" height="14" fill="#d922ff"/><rect x="1306" y="312" width="14" height="14" fill="#f01cff"/><rect x="1318" y="312" width="14" height="14" fill="#ff15f6"/><rect x="1330" y="312" width="14" height="14" fill="#ff0ee1"/><rect x="1342" y="312" width="14" height="14" fill="#ff08d0"/><rect x="1354" y="312" width="14" height="14" fill="#ff02c0"/><rect x="1366" y="312" width="14" height="14" fill="#99006b"/><rect x="1378" y="312" width="14" height="14" fill="#990064"/><rect x="1390" y="312" width="14" height="14" fill="#99005e"/><rect x="1402" y="312" width="14" height="14" fill="#990058"/><rect x="1414" y="312" width="14" height="14" fill="#990053"/><rect x="1426" y="312" width="14" height="14" fill="#99004f"/><rect x="1438" y="312" width="14" height="14" fill="#99004a"/><rect x="1450" y="312" width="14" height="14" fill="#990047"/><rect x="1462" y="312" width="14" height="14" fill="#990043"/><rect x="1474" y="312" width="14" height="14" fill="#990040"/><rect x="1486" y="312" width="14" height="14" fill="#99003d"/><rect x="1498" y="312" width="14" height="14" fill="#99003a"/><rect x="1510" y="312" width="14" height="14" fill="#990038"/><rect x="1522" y="312" width="14" height="14" fill="#990035"/><rect x="1534" y="312" width="14" height="14" fill="#990033"/><rect x="1546" y="312" width="14" height="14" fill="#990031"/><rect x="1558" y="312" width="14" height="14" fill="#99002f"/><rect x="1570" y="312" width="14" height="14" fill="#99002d"/><rect x="1582" y="312" width="14" height="14" fill="#99002b"/><rect x="1054" y="324" width="14" height="14" fill="#004a99"/><rect x="1066" y="324" width="14" height="14" fill="#004799"/><rect x="1078" y="324" width="14" height="14" fill="#004599"/><rect x="1090" y="324" width="14" height="14" fill="#004299"/><rect x="1102" y="324" width="14" height="14" fill="#003f99"/><rect x="1114" y="324" width="14" height="14" fill="#003d99"/><rect x="1126" y="324" width="14" height="14" fill="#003a99"/><rect x="1138" y="324" width="14" height="14" fill="#003799"/><rect x="1150" y="324" width="14" height="14" fill="#003499"/><rect x="1162" y="324" width="14" height="14" fill="#003199"/><rect x="1174" y="324" width="14" height="14" fill="#002e99"/><rect x="1186" y="324" width="14" height="14" fill="#1249ff"/><rect x="1198" y="324" width="14" height="14" fill="#2544ff"/><rect x="1210" y="324" width="14" height="14" fill="#383fff"/><rect x="1222" y="324" width="14" height="14" fill="#4b3aff"/><rect x="1234" y="324" width="14" height="14" fill="#5f35ff"/><rect x="1246" y="324" width="14" height="14" fill="#732fff"/><rect x="1258" y="324" width="14" height="14" fill="#872aff"/><rect x="1270" y="324" width="14" height="14" fill="#9c25ff"/><rect x="1282" y="324" width="14" height="14" fill="#b11fff"/><rect x="1294" y="324" width="14" height="14" fill="#c61aff"/><rect x="1306" y="324" width="14" height="14" fill="#db14ff"/><rect x="1318" y="324" width="14" height="14" fill="#f10eff"/><rect x="1330" y="324" width="14" height="14" fill="#ff08f6"/><rect x="1342" y="324" width="14" height="14" fill="#ff02e3"/><rect x="1354" y="324" width="14" height="14" fill="#99007e"/><rect x="1366" y="324" width="14" height="14" fill="#990075"/><rect x="1378" y="324" width="14" height="14" fill="#99006e"/><rect x="1390" y="324" width="14" height="14" fill="#990067"/><rect x="1402" y="324" width="14" height="14" fill="#990061"/><rect x="1414" y="324" width="14" height="14" fill="#99005b"/><rect x="1426" y="324" width="14" height="14" fill="#990056"/><rect x="1438" y="324" width="14" height="14" fill="#990051"/><rect x="1450" y="324" width="14" height="14" fill="#99004d"/><rect x="1462" y="324" width="14" height="14" fill="#99004a"/><rect x="1474" y="324" width="14" height="14" fill="#990046"/><rect x="1486" y="324" width="14" height="14" fill="#990043"/><rect x="1498" y="324" width="14" height="14" fill="#990040"/><rect x="1510" y="324" width="14" height="14" fill="#99003d"/><rect x="1522" y="324" width="14" height="14" fill="#99003a"/><rect x="1534" y="324" width="14" height="14" fill="#990038"/><rect x="1546" y="324" width="14" height="14" fill="#990036"/><rect x="1558" y="324" width="14" height="14" fill="#990034"/><rect x="1570" y="324" width="14" height="14" fill="#990032"/><rect x="1066" y="336" width="14" height="14" fill="#004099"/><rect x="1078" y="336" width="14" height="14" fill="#003e99"/><rect x="1090" y="336" width="14" height="14" fill="#003b99"/><rect x="1102" y="336" width="14" height="14" fill="#003999"/><rect x="1114" y="336" width="14" height="14" fill="#003699"/><rect x="1126" y="336" width="14" height="14" fill="#003399"/><rect x="1138" y="336" width="14" height="14" fill="#003199"/><rect x="1150" y="336" width="14" height="14" fill="#002e99"/><rect x="1162" y="336" width="14" height="14" fill="#002b99"/><rect x="1174" y="336" width="14" height="14" fill="#002899"/><rect x="1186" y="336" width="14" height="14" fill="#0e3fff"/><rect x="1198" y="336" width="14" height="14" fill="#1f3aff"/><rect x="1210" y="336" width="14" height="14" fill="#3136ff"/><rect x="1222" y="336" width="14" height="14" fill="#4431ff"/><rect x="1234" y="336" width="14" height="14" fill="#562cff"/><rect x="1246" y="336" width="14" height="14" fill="#6927ff"/><rect x="1258" y="336" width="14" height="14" fill="#7b22ff"/><rect x="1270" y="336" width="14" height="14" fill="#8f1dff"/><rect x="1282" y="336" width="14" height="14" fill="#a218ff"/><rect x="1294" y="336" width="14" height="14" fill="#b513ff"/><rect x="1306" y="336" width="14" height="14" fill="#c90dff"/><rect x="1318" y="336" width="14" height="14" fill="#dd08ff"/><rect x="1330" y="336" width="14" height="14" fill="#f203ff"/><rect x="1342" y="336" width="14" height="14" fill="#990094"/><rect x="1354" y="336" width="14" height="14" fill="#990089"/><rect x="1366" y="336" width="14" height="14" fill="#990080"/><rect x="1378" y="336" width="14" height="14" fill="#990077"/><rect x="1390" y="336" width="14" height="14" fill="#990070"/><rect x="1402" y="336" width="14" height="14" fill="#990069"/><rect x="1414" y="336" width="14" height="14" fill="#990063"/><rect x="1426" y="336" width="14" height="14" fill="#99005e"/><rect x="1438" y="336" width="14" height="14" fill="#990059"/><rect x="1450" y="336" width="14" height="14" fill="#990054"/><rect x="1462" y="336" width="14" height="14" fill="#990050"/><rect x="1474" y="336" width="14" height="14" fill="#99004c"/><rect x="1486" y="336" width="14" height="14" fill="#990049"/><rect x="1498" y="336" width="14" height="14" fill="#990046"/><rect x="1510" y="336" width="14" height="14" fill="#990043"/><rect x="1522" y="336" width="14" height="14" fill="#990040"/><rect x="1534" y="336" width="14" height="14" fill="#99003d"/><rect x="1546" y="336" width="14" height="14" fill="#99003b"/><rect x="1558" y="336" width="14" height="14" fill="#990038"/><rect x="1066" y="348" width="14" height="14" fill="#003a99"/><rect x="1078" y="348" width="14" height="14" fill="#003799"/><rect x="1090" y="348" width="14" height="14" fill="#003599"/><rect x="1102" y="348" width="14" height="14" fill="#003399"/><rect x="1114" y="348" width="14" height="14" fill="#003099"/><rect x="1126" y="348" width="14" height="14" fill="#002e99"/><rect x="1138" y="348" width="14" height="14" fill="#002b99"/><rect x="1150" y="348" width="14" height="14" fill="#002899"/><rect x="1162" y="348" width="14" height="14" fill="#002699"/><rect x="1174" y="348" width="14" height="14" fill="#002399"/><rect x="1186" y="348" width="14" height="14" fill="#0a37ff"/><rect x="1198" y="348" width="14" height="14" fill="#1b32ff"/><rect x="1210" y="348" width="14" height="14" fill="#2c2eff"/><rect x="1222" y="348" width="14" height="14" fill="#3d29ff"/><rect x="1234" y="348" width="14" height="14" fill="#4e24ff"/><rect x="1246" y="348" width="14" height="14" fill="#5f20ff"/><rect x="1258" y="348" width="14" height="14" fill="#711bff"/><rect x="1270" y="348" width="14" height="14" fill="#8316ff"/><rect x="1282" y="348" width="14" height="14" fill="#9511ff"/><rect x="1294" y="348" width="14" height="14" fill="#a70cff"/><rect x="1306" y="348" width="14" height="14" fill="#ba08ff"/><rect x="1318" y="348" width="14" height="14" fill="#cc03ff"/><rect x="1330" y="348" width="14" height="14" fill="#860099"/><rect x="1342" y="348" width="14" height="14" fill="#910099"/><rect x="1354" y="348" width="14" height="14" fill="#990094"/><rect x="1366" y="348" width="14" height="14" fill="#99008a"/><rect x="1378" y="348" width="14" height="14" fill="#990081"/><rect x="1390" y="348" width="14" height="14" fill="#990079"/><rect x="1402" y="348" width="14" height="14" fill="#990072"/><rect x="1414" y="348" width="14" height="14" fill="#99006b"/><rect x="1426" y="348" width="14" height="14" fill="#990065"/><rect x="1438" y="348" width="14" height="14" fill="#990060"/><rect x="1450" y="348" width="14" height="14" fill="#99005b"/><rect x="1462" y="348" width="14" height="14" fill="#990057"/><rect x="1474" y="348" width="14" height="14" fill="#990053"/><rect x="1486" y="348" width="14" height="14" fill="#99004f"/><rect x="1498" y="348" width="14" height="14" fill="#99004b"/><rect x="1510" y="348" width="14" height="14" fill="#990048"/><rect x="1522" y="348" width="14" height="14" fill="#990045"/><rect x="1534" y="348" width="14" height="14" fill="#990042"/><rect x="1546" y="348" width="14" height="14" fill="#990040"/><rect x="1078" y="360" width="14" height="14" fill="#003299"/><rect x="1090" y="360" width="14" height="14" fill="#003099"/><rect x="1102" y="360" width="14" height="14" fill="#002d99"/><rect x="1114" y="360" width="14" height="14" fill="#002b99"/><rect x="1126" y="360" width="14" height="14" fill="#002899"/><rect x="1138" y="360" width="14" height="14" fill="#002699"/><rect x="1150" y="360" width="14" height="14" fill="#002499"/><rect x="1162" y="360" width="14" height="14" fill="#002199"/><rect x="1174" y="360" width="14" height="14" fill="#001f99"/><rect x="1186" y="360" width="14" height="14" fill="#072fff"/><rect x="1198" y="360" width="14" height="14" fill="#172bff"/><rect x="1210" y="360" width="14" height="14" fill="#2727ff"/><rect x="1222" y="360" width="14" height="14" fill="#3722ff"/><rect x="1234" y="360" width="14" height="14" fill="#471eff"/><rect x="1246" y="360" width="14" height="14" fill="#5719ff"/><rect x="1258" y="360" width="14" height="14" fill="#6815ff"/><rect x="1270" y="360" width="14" height="14" fill="#7810ff"/><rect x="1282" y="360" width="14" height="14" fill="#890cff"/><rect x="1294" y="360" width="14" height="14" fill="#9a07ff"/><rect x="1306" y="360" width="14" height="14" fill="#ac02ff"/><rect x="1318" y="360" width="14" height="14" fill="#710099"/><rect x="1330" y="360" width="14" height="14" fill="#7c0099"/><rect x="1342" y="360" width="14" height="14" fill="#870099"/><rect x="1354" y="360" width="14" height="14" fill="#910099"/><rect x="1366" y="360" width="14" height="14" fill="#990095"/><rect x="1378" y="360" width="14" height="14" fill="#99008b"/><rect x="1390" y="360" width="14" height="14" fill="#990082"/><rect x="1402" y="360" width="14" height="14" fill="#99007a"/><rect x="1414" y="360" width="14" height="14" fill="#990073"/><rect x="1426" y="360" width="14" height="14" fill="#99006d"/><rect x="1438" y="360" width="14" height="14" fill="#990067"/><rect x="1450" y="360" width="14" height="14" fill="#990062"/><rect x="1462" y="360" width="14" height="14" fill="#99005d"/><rect x="1474" y="360" width="14" height="14" fill="#990059"/><rect x="1486" y="360" width="14" height="14" fill="#990055"/><rect x="1498" y="360" width="14" height="14" fill="#990051"/><rect x="1510" y="360" width="14" height="14" fill="#99004e"/><rect x="1522" y="360" width="14" height="14" fill="#99004a"/><rect x="1534" y="360" width="14" height="14" fill="#990048"/><rect x="1078" y="372" width="14" height="14" fill="#002d99"/><rect x="1090" y="372" width="14" height="14" fill="#002b99"/><rect x="1102" y="372" width="14" height="14" fill="#002899"/><rect x="1114" y="372" width="14" height="14" fill="#002699"/><rect x="1126" y="372" width="14" height="14" fill="#002499"/><rect x="1138" y="372" width="14" height="14" fill="#002299"/><rect x="1150" y="372" width="14" height="14" fill="#001f99"/><rect x="1162" y="372" width="14" height="14" fill="#001d99"/><rect x="1174" y="372" width="14" height="14" fill="#001a99"/><rect x="1186" y="372" width="14" height="14" fill="#0428ff"/><rect x="1198" y="372" width="14" height="14" fill="#1324ff"/><rect x="1210" y="372" width="14" height="14" fill="#2220ff"/><rect x="1222" y="372" width="14" height="14" fill="#311cff"/><rect x="1234" y="372" width="14" height="14" fill="#4018ff"/><rect x="1246" y="372" width="14" height="14" fill="#5014ff"/><rect x="1258" y="372" width="14" height="14" fill="#5f0fff"/><rect x="1270" y="372" width="14" height="14" fill="#6f0bff"/><rect x="1282" y="372" width="14" height="14" fill="#7f07ff"/><rect x="1294" y="372" width="14" height="14" fill="#8f02ff"/><rect x="1306" y="372" width="14" height="14" fill="#5f0099"/><rect x="1318" y="372" width="14" height="14" fill="#690099"/><rect x="1330" y="372" width="14" height="14" fill="#730099"/><rect x="1342" y="372" width="14" height="14" fill="#7d0099"/><rect x="1354" y="372" width="14" height="14" fill="#870099"/><rect x="1366" y="372" width="14" height="14" fill="#920099"/><rect x="1378" y="372" width="14" height="14" fill="#990095"/><rect x="1390" y="372" width="14" height="14" fill="#99008c"/><rect x="1402" y="372" width="14" height="14" fill="#990083"/><rect x="1414" y="372" width="14" height="14" fill="#99007c"/><rect x="1426" y="372" width="14" height="14" fill="#990075"/><rect x="1438" y="372" width="14" height="14" fill="#99006f"/><rect x="1450" y="372" width="14" height="14" fill="#990069"/><rect x="1462" y="372" width="14" height="14" fill="#990064"/><rect x="1474" y="372" width="14" height="14" fill="#99005f"/><rect x="1486" y="372" width="14" height="14" fill="#99005b"/><rect x="1498" y="372" width="14" height="14" fill="#990057"/><rect x="1510" y="372" width="14" height="14" fill="#990053"/><rect x="1522" y="372" width="14" height="14" fill="#990050"/><rect x="1090" y="384" width="14" height="14" fill="#002699"/><rect x="1102" y="384" width="14" height="14" fill="#002499"/><rect x="1114" y="384" width="14" height="14" fill="#002299"/><rect x="1126" y="384" width="14" height="14" fill="#002099"/><rect x="1138" y="384" width="14" height="14" fill="#001d99"/><rect x="1150" y="384" width="14" height="14" fill="#001b99"/><rect x="1162" y="384" width="14" height="14" fill="#001999"/><rect x="1174" y="384" width="14" height="14" fill="#001799"/><rect x="1186" y="384" width="14" height="14" fill="#0222ff"/><rect x="1198" y="384" width="14" height="14" fill="#101eff"/><rect x="1210" y="384" width="14" height="14" fill="#1e1bff"/><rect x="1222" y="384" width="14" height="14" fill="#2c17ff"/><rect x="1234" y="384" width="14" height="14" fill="#3b13ff"/><rect x="1246" y="384" width="14" height="14" fill="#490fff"/><rect x="1258" y="384" width="14" height="14" fill="#580aff"/><rect x="1270" y="384" width="14" height="14" fill="#6706ff"/><rect x="1282" y="384" width="14" height="14" fill="#7602ff"/><rect x="1294" y="384" width="14" height="14" fill="#500099"/><rect x="1306" y="384" width="14" height="14" fill="#590099"/><rect x="1318" y="384" width="14" height="14" fill="#620099"/><rect x="1330" y="384" width="14" height="14" fill="#6c0099"/><rect x="1342" y="384" width="14" height="14" fill="#750099"/><rect x="1354" y="384" width="14" height="14" fill="#7f0099"/><rect x="1366" y="384" width="14" height="14" fill="#880099"/><rect x="1378" y="384" width="14" height="14" fill="#920099"/><rect x="1390" y="384" width="14" height="14" fill="#990095"/><rect x="1402" y="384" width="14" height="14" fill="#99008c"/><rect x="1414" y="384" width="14" height="14" fill="#990084"/><rect x="1426" y="384" width="14" height="14" fill="#99007d"/><rect x="1438" y="384" width="14" height="14" fill="#990076"/><rect x="1450" y="384" width="14" height="14" fill="#990070"/><rect x="1462" y="384" width="14" height="14" fill="#99006b"/><rect x="1474" y="384" width="14" height="14" fill="#990066"/><rect x="1486" y="384" width="14" height="14" fill="#990061"/><rect x="1498" y="384" width="14" height="14" fill="#99005d"/><rect x="1510" y="384" width="14" height="14" fill="#990059"/><rect x="1090" y="396" width="14" height="14" fill="#002299"/><rect x="1102" y="396" width="14" height="14" fill="#002099"/><rect x="1114" y="396" width="14" height="14" fill="#001e99"/><rect x="1126" y="396" width="14" height="14" fill="#001c99"/><rect x="1138" y="396" width="14" height="14" fill="#001a99"/><rect x="1150" y="396" width="14" height="14" fill="#001899"/><rect x="1162" y="396" width="14" height="14" fill="#001699"/><rect x="1174" y="396" width="14" height="14" fill="#001399"/><rect x="1186" y="396" width="14" height="14" fill="#001dff"/><rect x="1198" y="396" width="14" height="14" fill="#0d19ff"/><rect x="1210" y="396" width="14" height="14" fill="#1a15ff"/><rect x="1222" y="396" width="14" height="14" fill="#2812ff"/><rect x="1234" y="396" width="14" height="14" fill="#360eff"/><rect x="1246" y="396" width="14" height="14" fill="#430aff"/><rect x="1258" y="396" width="14" height="14" fill="#5106ff"/><rect x="1270" y="396" width="14" height="14" fill="#6002ff"/><rect x="1282" y="396" width="14" height="14" fill="#420099"/><rect x="1294" y="396" width="14" height="14" fill="#4a0099"/><rect x="1306" y="396" width="14" height="14" fill="#530099"/><rect x="1318" y="396" width="14" height="14" fill="#5c0099"/><rect x="1330" y="396" width="14" height="14" fill="#650099"/><rect x="1342" y="396" width="14" height="14" fill="#6e0099"/><rect x="1354" y="396" width="14" height="14" fill="#770099"/><rect x="1366" y="396" width="14" height="14" fill="#800099"/><rect x="1378" y="396" width="14" height="14" fill="#890099"/><rect x="1390" y="396" width="14" height="14" fill="#920099"/><rect x="1402" y="396" width="14" height="14" fill="#990095"/><rect x="1414" y="396" width="14" height="14" fill="#99008d"/><rect x="1426" y="396" width="14" height="14" fill="#990085"/><rect x="1438" y="396" width="14" height="14" fill="#99007e"/><rect x="1450" y="396" width="14" height="14" fill="#990078"/><rect x="1462" y="396" width="14" height="14" fill="#990072"/><rect x="1474" y="396" width="14" height="14" fill="#99006d"/><rect x="1486" y="396" width="14" height="14" fill="#990068"/><rect x="1498" y="396" width="14" height="14" fill="#990063"/><rect x="1102" y="408" width="14" height="14" fill="#001d99"/><rect x="1114" y="408" width="14" height="14" fill="#001b99"/><rect x="1126" y="408" width="14" height="14" fill="#001999"/><rect x="1138" y="408" width="14" height="14" fill="#001799"/><rect x="1150" y="408" width="14" height="14" fill="#001499"/><rect x="1162" y="408" width="14" height="14" fill="#001299"/><rect x="1174" y="408" width="14" height="14" fill="#001099"/><rect x="1186" y="408" width="14" height="14" fill="#000e99"/><rect x="1198" y="408" width="14" height="14" fill="#0a14ff"/><rect x="1210" y="408" width="14" height="14" fill="#1711ff"/><rect x="1222" y="408" width="14" height="14" fill="#240dff"/><rect x="1234" y="408" width="14" height="14" fill="#3109ff"/><rect x="1246" y="408" width="14" height="14" fill="#3e06ff"/><rect x="1258" y="408" width="14" height="14" fill="#4b02ff"/><rect x="1270" y="408" width="14" height="14" fill="#350099"/><rect x="1282" y="408" width="14" height="14" fill="#3d0099"/><rect x="1294" y="408" width="14" height="14" fill="#450099"/><rect x="1306" y="408" width="14" height="14" fill="#4e0099"/><rect x="1318" y="408" width="14" height="14" fill="#560099"/><rect x="1330" y="408" width="14" height="14" fill="#5e0099"/><rect x="1342" y="408" width="14" height="14" fill="#670099"/><rect x="1354" y="408" width="14" height="14" fill="#6f0099"/><rect x="1366" y="408" width="14" height="14" fill="#780099"/><rect x="1378" y="408" width="14" height="14" fill="#810099"/><rect x="1390" y="408" width="14" height="14" fill="#8a0099"/><rect x="1402" y="408" width="14" height="14" fill="#920099"/><rect x="1414" y="408" width="14" height="14" fill="#990096"/><rect x="1426" y="408" width="14" height="14" fill="#99008d"/><rect x="1438" y="408" width="14" height="14" fill="#990086"/><rect x="1450" y="408" width="14" height="14" fill="#99007f"/><rect x="1462" y="408" width="14" height="14" fill="#990079"/><rect x="1474" y="408" width="14" height="14" fill="#990073"/><rect x="1486" y="408" width="14" height="14" fill="#99006e"/><rect x="1114" y="420" width="14" height="14" fill="#001799"/><rect x="1126" y="420" width="14" height="14" fill="#001599"/><rect x="1138" y="420" width="14" height="14" fill="#001399"/><rect x="1150" y="420" width="14" height="14" fill="#001199"/><rect x="1162" y="420" width="14" height="14" fill="#000f99"/><rect x="1174" y="420" width="14" height="14" fill="#000d99"/><rect x="1186" y="420" width="14" height="14" fill="#000b99"/><rect x="1198" y="420" width="14" height="14" fill="#0810ff"/><rect x="1210" y="420" width="14" height="14" fill="#140dff"/><rect x="1222" y="420" width="14" height="14" fill="#2009ff"/><rect x="1234" y="420" width="14" height="14" fill="#2d06ff"/><rect x="1246" y="420" width="14" height="14" fill="#3902ff"/><rect x="1258" y="420" width="14" height="14" fill="#2a0099"/><rect x="1270" y="420" width="14" height="14" fill="#310099"/><rect x="1282" y="420" width="14" height="14" fill="#390099"/><rect x="1294" y="420" width="14" height="14" fill="#410099"/><rect x="1306" y="420" width="14" height="14" fill="#490099"/><rect x="1318" y="420" width="14" height="14" fill="#510099"/><rect x="1330" y="420" width="14" height="14" fill="#590099"/><rect x="1342" y="420" width="14" height="14" fill="#610099"/><rect x="1354" y="420" width="14" height="14" fill="#690099"/><rect x="1366" y="420" width="14" height="14" fill="#710099"/><rect x="1378" y="420" width="14" height="14" fill="#790099"/><rect x="1390" y="420" width="14" height="14" fill="#820099"/><rect x="1402" y="420" width="14" height="14" fill="#8a0099"/><rect x="1414" y="420" width="14" height="14" fill="#930099"/><rect x="1426" y="420" width="14" height="14" fill="#990096"/><rect x="1438" y="420" width="14" height="14" fill="#99008e"/><rect x="1450" y="420" width="14" height="14" fill="#990087"/><rect x="1462" y="420" width="14" height="14" fill="#990080"/><rect x="1474" y="420" width="14" height="14" fill="#99007a"/><rect x="1114" y="432" width="14" height="14" fill="#001499"/><rect x="1126" y="432" width="14" height="14" fill="#001399"/><rect x="1138" y="432" width="14" height="14" fill="#001199"/><rect x="1150" y="432" width="14" height="14" fill="#000f99"/><rect x="1162" y="432" width="14" height="14" fill="#000d99"/><rect x="1174" y="432" width="14" height="14" fill="#000b99"/><rect x="1186" y="432" width="14" height="14" fill="#000999"/><rect x="1198" y="432" width="14" height="14" fill="#050cff"/><rect x="1210" y="432" width="14" height="14" fill="#1109ff"/><rect x="1222" y="432" width="14" height="14" fill="#1d05ff"/><rect x="1234" y="432" width="14" height="14" fill="#2902ff"/><rect x="1246" y="432" width="14" height="14" fill="#200099"/><rect x="1258" y="432" width="14" height="14" fill="#270099"/><rect x="1270" y="432" width="14" height="14" fill="#2e0099"/><rect x="1282" y="432" width="14" height="14" fill="#350099"/><rect x="1294" y="432" width="14" height="14" fill="#3d0099"/><rect x="1306" y="432" width="14" height="14" fill="#440099"/><rect x="1318" y="432" width="14" height="14" fill="#4c0099"/><rect x="1330" y="432" width="14" height="14" fill="#540099"/><rect x="1342" y="432" width="14" height="14" fill="#5b0099"/><rect x="1354" y="432" width="14" height="14" fill="#630099"/><rect x="1366" y="432" width="14" height="14" fill="#6b0099"/><rect x="1378" y="432" width="14" height="14" fill="#730099"/><rect x="1390" y="432" width="14" height="14" fill="#7b0099"/><rect x="1402" y="432" width="14" height="14" fill="#830099"/><rect x="1414" y="432" width="14" height="14" fill="#8b0099"/><rect x="1426" y="432" width="14" height="14" fill="#930099"/><rect x="1438" y="432" width="14" height="14" fill="#990096"/><rect x="1450" y="432" width="14" height="14" fill="#99008e"/><rect x="1462" y="432" width="14" height="14" fill="#990087"/><rect x="1126" y="444" width="14" height="14" fill="#001099"/><rect x="1138" y="444" width="14" height="14" fill="#000e99"/><rect x="1150" y="444" width="14" height="14" fill="#000c99"/><rect x="1162" y="444" width="14" height="14" fill="#000a99"/><rect x="1174" y="444" width="14" height="14" fill="#000999"/><rect x="1186" y="444" width="14" height="14" fill="#000799"/><rect x="1198" y="444" width="14" height="14" fill="#0308ff"/><rect x="1210" y="444" width="14" height="14" fill="#0f05ff"/><rect x="1222" y="444" width="14" height="14" fill="#1a02ff"/><rect x="1234" y="444" width="14" height="14" fill="#160099"/><rect x="1246" y="444" width="14" height="14" fill="#1d0099"/><rect x="1258" y="444" width="14" height="14" fill="#240099"/><rect x="1270" y="444" width="14" height="14" fill="#2b0099"/><rect x="1282" y="444" width="14" height="14" fill="#320099"/><rect x="1294" y="444" width="14" height="14" fill="#390099"/><rect x="1306" y="444" width="14" height="14" fill="#400099"/><rect x="1318" y="444" width="14" height="14" fill="#480099"/><rect x="1330" y="444" width="14" height="14" fill="#4f0099"/><rect x="1342" y="444" width="14" height="14" fill="#560099"/><rect x="1354" y="444" width="14" height="14" fill="#5e0099"/><rect x="1366" y="444" width="14" height="14" fill="#650099"/><rect x="1378" y="444" width="14" height="14" fill="#6d0099"/><rect x="1390" y="444" width="14" height="14" fill="#740099"/><rect x="1402" y="444" width="14" height="14" fill="#7c0099"/><rect x="1414" y="444" width="14" height="14" fill="#830099"/><rect x="1426" y="444" width="14" height="14" fill="#8b0099"/><rect x="1438" y="444" width="14" height="14" fill="#930099"/><rect x="1450" y="444" width="14" height="14" fill="#990096"/><rect x="1138" y="456" width="14" height="14" fill="#000c99"/><rect x="1150" y="456" width="14" height="14" fill="#000a99"/><rect x="1162" y="456" width="14" height="14" fill="#000899"/><rect x="1174" y="456" width="14" height="14" fill="#000699"/><rect x="1186" y="456" width="14" height="14" fill="#000599"/><rect x="1198" y="456" width="14" height="14" fill="#0205ff"/><rect x="1210" y="456" width="14" height="14" fill="#0c02ff"/><rect x="1222" y="456" width="14" height="14" fill="#0e0099"/><rect x="1234" y="456" width="14" height="14" fill="#140099"/><rect x="1246" y="456" width="14" height="14" fill="#1b0099"/><rect x="1258" y="456" width="14" height="14" fill="#220099"/><rect x="1270" y="456" width="14" height="14" fill="#280099"/><rect x="1282" y="456" width="14" height="14" fill="#2f0099"/><rect x="1294" y="456" width="14" height="14" fill="#360099"/><rect x="1306" y="456" width="14" height="14" fill="#3d0099"/><rect x="1318" y="456" width="14" height="14" fill="#440099"/><rect x="1330" y="456" width="14" height="14" fill="#4b0099"/><rect x="1342" y="456" width="14" height="14" fill="#520099"/><rect x="1354" y="456" width="14" height="14" fill="#590099"/><rect x="1366" y="456" width="14" height="14" fill="#600099"/><rect x="1378" y="456" width="14" height="14" fill="#670099"/><rect x="1390" y="456" width="14" height="14" fill="#6e0099"/><rect x="1402" y="456" width="14" height="14" fill="#750099"/><rect x="1414" y="456" width="14" height="14" fill="#7d0099"/><rect x="1426" y="456" width="14" height="14" fill="#840099"/><rect x="1438" y="456" width="14" height="14" fill="#8c0099"/><rect x="1138" y="468" width="14" height="14" fill="#000a99"/><rect x="1150" y="468" width="14" height="14" fill="#000899"/><rect x="1162" y="468" width="14" height="14" fill="#000699"/><rect x="1174" y="468" width="14" height="14" fill="#000499"/><rect x="1186" y="468" width="14" height="14" fill="#000399"/><rect x="1198" y="468" width="14" height="14" fill="#0002ff"/><rect x="1210" y="468" width="14" height="14" fill="#060099"/><rect x="1222" y="468" width="14" height="14" fill="#0c0099"/><rect x="1234" y="468" width="14" height="14" fill="#120099"/><rect x="1246" y="468" width="14" height="14" fill="#190099"/><rect x="1258" y="468" width="14" height="14" fill="#1f0099"/><rect x="1270" y="468" width="14" height="14" fill="#260099"/><rect x="1282" y="468" width="14" height="14" fill="#2c0099"/><rect x="1294" y="468" width="14" height="14" fill="#330099"/><rect x="1306" y="468" width="14" height="14" fill="#390099"/><rect x="1318" y="468" width="14" height="14" fill="#400099"/><rect x="1330" y="468" width="14" height="14" fill="#470099"/><rect x="1342" y="468" width="14" height="14" fill="#4d0099"/><rect x="1354" y="468" width="14" height="14" fill="#540099"/><rect x="1366" y="468" width="14" height="14" fill="#5b0099"/><rect x="1378" y="468" width="14" height="14" fill="#620099"/><rect x="1390" y="468" width="14" height="14" fill="#690099"/><rect x="1402" y="468" width="14" height="14" fill="#700099"/><rect x="1414" y="468" width="14" height="14" fill="#770099"/><rect x="1426" y="468" width="14" height="14" fill="#7e0099"/><rect x="1150" y="480" width="14" height="14" fill="#000699"/><rect x="1162" y="480" width="14" height="14" fill="#000499"/><rect x="1174" y="480" width="14" height="14" fill="#000399"/><rect x="1186" y="480" width="14" height="14" fill="#000199"/><rect x="1198" y="480" width="14" height="14" fill="#000099"/><rect x="1210" y="480" width="14" height="14" fill="#050099"/><rect x="1222" y="480" width="14" height="14" fill="#0b0099"/><rect x="1234" y="480" width="14" height="14" fill="#110099"/><rect x="1246" y="480" width="14" height="14" fill="#170099"/><rect x="1258" y="480" width="14" height="14" fill="#1d0099"/><rect x="1270" y="480" width="14" height="14" fill="#230099"/><rect x="1282" y="480" width="14" height="14" fill="#290099"/><rect x="1294" y="480" width="14" height="14" fill="#300099"/><rect x="1306" y="480" width="14" height="14" fill="#360099"/><rect x="1318" y="480" width="14" height="14" fill="#3c0099"/><rect x="1330" y="480" width="14" height="14" fill="#430099"/><rect x="1342" y="480" width="14" height="14" fill="#490099"/><rect x="1354" y="480" width="14" height="14" fill="#500099"/><rect x="1366" y="480" width="14" height="14" fill="#560099"/><rect x="1378" y="480" width="14" height="14" fill="#5d0099"/><rect x="1390" y="480" width="14" height="14" fill="#640099"/><rect x="1402" y="480" width="14" height="14" fill="#6a0099"/><rect x="1414" y="480" width="14" height="14" fill="#710099"/><rect x="1162" y="492" width="14" height="14" fill="#000299"/><rect x="1174" y="492" width="14" height="14" fill="#000199"/><rect x="1186" y="492" width="14" height="14" fill="#000099"/><rect x="1198" y="492" width="14" height="14" fill="#000099"/><rect x="1210" y="492" width="14" height="14" fill="#040099"/><rect x="1222" y="492" width="14" height="14" fill="#090099"/><rect x="1234" y="492" width="14" height="14" fill="#0f0099"/><rect x="1246" y="492" width="14" height="14" fill="#150099"/><rect x="1258" y="492" width="14" height="14" fill="#1b0099"/><rect x="1270" y="492" width="14" height="14" fill="#210099"/><rect x="1282" y="492" width="14" height="14" fill="#270099"/><rect x="1294" y="492" width="14" height="14" fill="#2d0099"/><rect x="1306" y="492" width="14" height="14" fill="#330099"/><rect x="1318" y="492" width="14" height="14" fill="#390099"/><rect x="1330" y="492" width="14" height="14" fill="#3f0099"/><rect x="1342" y="492" width="14" height="14" fill="#460099"/><rect x="1354" y="492" width="14" height="14" fill="#4c0099"/><rect x="1366" y="492" width="14" height="14" fill="#520099"/><rect x="1378" y="492" width="14" height="14" fill="#580099"/><rect x="1390" y="492" width="14" height="14" fill="#5f0099"/><rect x="1402" y="492" width="14" height="14" fill="#650099"/><rect x="1162" y="504" width="14" height="14" fill="#000199"/><rect x="1174" y="504" width="14" height="14" fill="#000099"/><rect x="1186" y="504" width="14" height="14" fill="#000099"/><rect x="1198" y="504" width="14" height="14" fill="#000099"/><rect x="1210" y="504" width="14" height="14" fill="#030099"/><rect x="1222" y="504" width="14" height="14" fill="#080099"/><rect x="1234" y="504" width="14" height="14" fill="#0e0099"/><rect x="1246" y="504" width="14" height="14" fill="#130099"/><rect x="1258" y="504" width="14" height="14" fill="#190099"/><rect x="1270" y="504" width="14" height="14" fill="#1f0099"/><rect x="1282" y="504" width="14" height="14" fill="#250099"/><rect x="1294" y="504" width="14" height="14" fill="#2b0099"/><rect x="1306" y="504" width="14" height="14" fill="#300099"/><rect x="1318" y="504" width="14" height="14" fill="#360099"/><rect x="1330" y="504" width="14" height="14" fill="#3c0099"/><rect x="1342" y="504" width="14" height="14" fill="#420099"/><rect x="1354" y="504" width="14" height="14" fill="#480099"/><rect x="1366" y="504" width="14" height="14" fill="#4e0099"/><rect x="1378" y="504" width="14" height="14" fill="#540099"/><rect x="1390" y="504" width="14" height="14" fill="#5b0099"/><rect x="1174" y="516" width="14" height="14" fill="#000099"/><rect x="1186" y="516" width="14" height="14" fill="#000099"/><rect x="1198" y="516" width="14" height="14" fill="#000099"/><rect x="1210" y="516" width="14" height="14" fill="#020099"/><rect x="1222" y="516" width="14" height="14" fill="#070099"/><rect x="1234" y="516" width="14" height="14" fill="#0c0099"/><rect x="1246" y="516" width="14" height="14" fill="#120099"/><rect x="1258" y="516" width="14" height="14" fill="#170099"/><rect x="1270" y="516" width="14" height="14" fill="#1d0099"/><rect x="1282" y="516" width="14" height="14" fill="#230099"/><rect x="1294" y="516" width="14" height="14" fill="#280099"/><rect x="1306" y="516" width="14" height="14" fill="#2e0099"/><rect x="1318" y="516" width="14" height="14" fill="#340099"/><rect x="1330" y="516" width="14" height="14" fill="#390099"/><rect x="1342" y="516" width="14" height="14" fill="#3f0099"/><rect x="1354" y="516" width="14" height="14" fill="#450099"/><rect x="1366" y="516" width="14" height="14" fill="#4b0099"/><rect x="1378" y="516" width="14" height="14" fill="#510099"/><rect x="1186" y="528" width="14" height="14" fill="#000099"/><rect x="1198" y="528" width="14" height="14" fill="#000099"/><rect x="1210" y="528" width="14" height="14" fill="#010099"/><rect x="1222" y="528" width="14" height="14" fill="#060099"/><rect x="1234" y="528" width="14" height="14" fill="#0b0099"/><rect x="1246" y="528" width="14" height="14" fill="#100099"/><rect x="1258" y="528" width="14" height="14" fill="#160099"/><rect x="1270" y="528" width="14" height="14" fill="#1b0099"/><rect x="1282" y="528" width="14" height="14" fill="#210099"/><rect x="1294" y="528" width="14" height="14" fill="#260099"/><rect x="1306" y="528" width="14" height="14" fill="#2b0099"/><rect x="1318" y="528" width="14" height="14" fill="#310099"/><rect x="1330" y="528" width="14" height="14" fill="#360099"/><rect x="1342" y="528" width="14" height="14" fill="#3c0099"/><rect x="1354" y="528" width="14" height="14" fill="#420099"/><rect x="1366" y="528" width="14" height="14" fill="#470099"/><rect x="1198" y="540" width="14" height="14" fill="#000099"/><rect x="1210" y="540" width="14" height="14" fill="#000099"/><rect x="1222" y="540" width="14" height="14" fill="#050099"/><rect x="1234" y="540" width="14" height="14" fill="#0a0099"/><rect x="1246" y="540" width="14" height="14" fill="#0f0099"/><rect x="1258" y="540" width="14" height="14" fill="#140099"/><rect x="1270" y="540" width="14" height="14" fill="#190099"/><rect x="1282" y="540" width="14" height="14" fill="#1f0099"/><rect x="1294" y="540" width="14" height="14" fill="#240099"/><rect x="1306" y="540" width="14" height="14" fill="#290099"/><rect x="1318" y="540" width="14" height="14" fill="#2f0099"/><rect x="1330" y="540" width="14" height="14" fill="#340099"/><rect x="1342" y="540" width="14" height="14" fill="#390099"/><rect x="1354" y="540" width="14" height="14" fill="#3f0099"/><rect x="1210" y="552" width="14" height="14" fill="#000099"/><rect x="1222" y="552" width="14" height="14" fill="#040099"/><rect x="1234" y="552" width="14" height="14" fill="#090099"/><rect x="1246" y="552" width="14" height="14" fill="#0e0099"/><rect x="1258" y="552" width="14" height="14" fill="#130099"/><rect x="1270" y="552" width="14" height="14" fill="#180099"/><rect x="1282" y="552" width="14" height="14" fill="#1d0099"/><rect x="1294" y="552" width="14" height="14" fill="#220099"/><rect x="1306" y="552" width="14" height="14" fill="#270099"/><rect x="1318" y="552" width="14" height="14" fill="#2c0099"/><rect x="1330" y="552" width="14" height="14" fill="#310099"/><rect x="1342" y="552" width="14" height="14" fill="#370099"/><rect x="1222" y="564" width="14" height="14" fill="#030099"/><rect x="1234" y="564" width="14" height="14" fill="#080099"/><rect x="1246" y="564" width="14" height="14" fill="#0d0099"/><rect x="1258" y="564" width="14" height="14" fill="#110099"/><rect x="1270" y="564" width="14" height="14" fill="#160099"/><rect x="1282" y="564" width="14" height="14" fill="#1b0099"/><rect x="1294" y="564" width="14" height="14" fill="#200099"/><rect x="1306" y="564" width="14" height="14" fill="#250099"/><rect x="1318" y="564" width="14" height="14" fill="#2a0099"/><rect x="1330" y="564" width="14" height="14" fill="#2f0099"/><rect x="1246" y="576" width="14" height="14" fill="#0b0099"/><rect x="1258" y="576" width="14" height="14" fill="#100099"/><rect x="1270" y="576" width="14" height="14" fill="#150099"/><rect x="1282" y="576" width="14" height="14" fill="#1a0099"/><rect x="1294" y="576" width="14" height="14" fill="#1e0099"/><rect x="1306" y="576" width="14" height="14" fill="#230099"/><rect x="1318" y="576" width="14" height="14" fill="#280099"/><rect x="1258" y="588" width="14" height="14" fill="#0f0099"/><rect x="1270" y="588" width="14" height="14" fill="#140099"/><rect x="1282" y="588" width="14" height="14" fill="#180099"/><rect x="1294" y="588" width="14" height="14" fill="#1d0099"/><rect x="1306" y="588" width="14" height="14" fill="#220099"/><rect x="1270" y="600" width="14" height="14" fill="#120099"/><rect x="1282" y="600" width="14" height="14" fill="#170099"/><rect x="1294" y="600" width="14" height="14" fill="#1b0099"/></g></g></g><defs><linearGradient id="ilo" gradientUnits="userSpaceOnUse" x1="1441" y1="520" x2="1652" y2="604"><stop offset="0" stop-color="#a8ff00"/><stop offset="0.4" stop-color="#ffff00"/><stop offset="1" stop-color="#ffa800"/></linearGradient><linearGradient id="ihi" gradientUnits="userSpaceOnUse" x1="1441" y1="461" x2="1652" y2="589"><stop offset="0" stop-color="#4a8a00"/><stop offset="0.5" stop-color="#929200"/><stop offset="1" stop-color="#9a6800"/></linearGradient></defs><path d="M1441 477 L1652 589.5 L1652 604 L1441 604Z" fill="url(#ilo)"/><path d="M1441 461 L1652 461 L1652 589.5 L1441 477Z" fill="url(#ihi)"/></svg><canvas id="cie" class="a" style="left:1018px;top:120px" width="641" height="493"></canvas><canvas id="ins" class="a" style="left:1441px;top:461px" width="211" height="143"></canvas><div class="a" style="left:0;top:925px;width:1669px;height:82px;background:linear-gradient(#333,#2a2a2a)"></div><div class="a" style="left:1px;top:930px;width:57px;height:80px;border-radius:5px;background:linear-gradient(#a4a4a4,#8a8a8a 40%,#5e5e5e)"></div><div class="a" style="left:19.5px;top:933px;width:19px;height:19px;border-radius:50%;background:linear-gradient(#6a6a6a,#9a9a9a)"></div><div class="a" style="left:24px;top:938px;width:0;height:0;border-left:5.5px solid transparent;border-right:5.5px solid transparent;border-bottom:6px solid #2a2a2a"></div><div class="a" style="left:7px;top:963px;width:44px;height:38px;border-radius:5px;background:#ffff00;box-shadow:inset 0 0 1px 1px #c8c800"></div><div class="a" style="left:65px;top:931px;width:187px;height:80px;border-radius:5px;background:linear-gradient(#a8a8a8,#8c8c8c 35%,#5a5a5a)"></div><div class="a" style="left:72px;top:937px;width:174px;height:45px;border-radius:5px;background:#c0c1a3;box-shadow:inset 1px 1px 1px rgba(0,0,0,0.35)"></div><div class="a" style="left:65px;top:988px;width:187px;text-align:center;font-size:13px;font-weight:bold;color:#333">20%</div><div class="a" style="left:255px;top:931px;width:187px;height:80px;border-radius:5px;background:linear-gradient(#a8a8a8,#8c8c8c 35%,#5a5a5a)"></div><div class="a" style="left:262px;top:937px;width:174px;height:45px;border-radius:5px;background:#c2c28a;box-shadow:inset 1px 1px 1px rgba(0,0,0,0.35)"></div><div class="a" style="left:255px;top:988px;width:187px;text-align:center;font-size:13px;font-weight:bold;color:#333">40%</div><div class="a" style="left:445px;top:931px;width:187px;height:80px;border-radius:5px;background:linear-gradient(#a8a8a8,#8c8c8c 35%,#5a5a5a)"></div><div class="a" style="left:452px;top:937px;width:174px;height:45px;border-radius:5px;background:#c1c170;box-shadow:inset 1px 1px 1px rgba(0,0,0,0.35)"></div><div class="a" style="left:445px;top:988px;width:187px;text-align:center;font-size:13px;font-weight:bold;color:#333">60%</div><div class="a" style="left:635px;top:931px;width:187px;height:80px;border-radius:5px;background:linear-gradient(#a8a8a8,#8c8c8c 35%,#5a5a5a)"></div><div class="a" style="left:642px;top:937px;width:174px;height:45px;border-radius:5px;background:#c1c04e;box-shadow:inset 1px 1px 1px rgba(0,0,0,0.35)"></div><div class="a" style="left:635px;top:988px;width:187px;text-align:center;font-size:13px;font-weight:bold;color:#333">80%</div><div class="a" style="left:825px;top:931px;width:187px;height:80px;border-radius:5px;background:linear-gradient(#1c1c1c,#262626 30%,#333)"></div><div class="a" style="left:831px;top:936.5px;width:175.5px;height:45.5px;border-radius:5px;background:#c2c000"></div><div class="a" style="left:825px;top:988px;width:187px;text-align:center;font-size:13px;font-weight:bold;color:#fafafa">100%</div><div class="a" style="left:1012px;top:931px;width:254px;height:76px;background:linear-gradient(#484848,#333 45%,#262626)"></div><div class="a" style="left:1266px;top:930px;width:60px;height:80px;border-radius:5px;background:linear-gradient(#b0b0b0,#8a8a8a 30%,#9a9a9a 31%,#7a7a7a)"></div><div class="a" style="left:1266px;top:953px;width:60px;height:1.2px;background:#2a2a2a"></div><div class="a" style="left:1286.5px;top:933.5px;width:19px;height:19px;border-radius:50%;background:linear-gradient(#7c7c7c,#a8a8a8)"></div><div class="a" style="left:1290.5px;top:940px;width:0;height:0;border-left:5.5px solid transparent;border-right:5.5px solid transparent;border-bottom:6px solid #2a2a2a"></div><div class="a" style="left:1276.5px;top:961px;width:39px;height:38.5px;border-radius:6px;border:3px solid #1e1e1e;background:linear-gradient(#b8b8b8,#a8a8a8 50%,#969696 51%,#9c9c9c)"></div><div class="a" style="left:1288px;top:972px;width:17px;height:17px;background:linear-gradient(#1a1a1a 50%,#000 50%)"></div><div class="a" style="left:1327px;top:930px;width:58px;height:38px;background:linear-gradient(#b4b4b4,#8e8e8e 60%,#6e6e6e)"></div><div class="a" style="left:1343.5px;top:936px;width:25px;height:25px;border-radius:50%;background:linear-gradient(#6c6c6c,#a8a8a8)"></div><div class="a" style="left:1386px;top:930px;width:55px;height:38px;background:linear-gradient(#b4b4b4,#8e8e8e 60%,#6e6e6e)"></div><div class="a" style="left:1401.0px;top:936px;width:25px;height:25px;border-radius:50%;background:linear-gradient(#6c6c6c,#a8a8a8)"></div><div class="a" style="left:1442px;top:930px;width:55px;height:38px;background:linear-gradient(#b4b4b4,#8e8e8e 60%,#6e6e6e)"></div><div class="a" style="left:1457.0px;top:936px;width:25px;height:25px;border-radius:50%;background:linear-gradient(#6c6c6c,#a8a8a8)"></div><div class="a" style="left:1498px;top:930px;width:56px;height:38px;background:linear-gradient(#b4b4b4,#8e8e8e 60%,#6e6e6e)"></div><div class="a" style="left:1513.5px;top:936px;width:25px;height:25px;border-radius:50%;background:linear-gradient(#6c6c6c,#a8a8a8)"></div><div class="a" style="left:1555px;top:930px;width:55px;height:38px;background:linear-gradient(#b4b4b4,#8e8e8e 60%,#6e6e6e)"></div><div class="a" style="left:1570.0px;top:936px;width:25px;height:25px;border-radius:50%;background:linear-gradient(#6c6c6c,#a8a8a8)"></div><div class="a" style="left:1611px;top:930px;width:54px;height:38px;background:linear-gradient(#b4b4b4,#8e8e8e 60%,#6e6e6e)"></div><div class="a" style="left:1625.5px;top:936px;width:25px;height:25px;border-radius:50%;background:linear-gradient(#6c6c6c,#a8a8a8)"></div><div class="a" style="left:1327px;top:969px;width:170px;height:38px;background:linear-gradient(#b8b8b8,#8e8e8e 60%,#707070)"></div><div class="a" style="left:1498px;top:969px;width:168px;height:38px;background:linear-gradient(#b8b8b8,#8e8e8e 60%,#707070)"></div><div class="a" style="left:1352.5px;top:976px;width:25px;height:25px;border-radius:50%;background:linear-gradient(#767676,#a8a8a8)"></div><div class="a" style="left:1620px;top:976px;width:25px;height:25px;border-radius:50%;background:linear-gradient(#767676,#a8a8a8)"></div><div class="a" style="left:1666px;top:925px;width:3px;height:82px;background:#1a1a1a"></div><div class="a" style="left:1661px;top:38px;width:8px;height:52px;background:linear-gradient(90deg,rgba(0,0,0,0),rgba(0,0,0,0.45))"></div><div class="a" style="left:1661px;top:648px;width:8px;height:277px;background:linear-gradient(90deg,rgba(0,0,0,0),rgba(0,0,0,0.45))"></div><svg class="a" style="left:0;top:0" width="1669" height="1007" viewBox="0 0 1669 1007"><rect x="1145.0" y="144.0" width="13" height="13" fill="none" stroke="#fff" stroke-opacity="0.95" stroke-width="1.8"/><rect x="1157.0" y="155.8" width="13" height="13" fill="none" stroke="#fff" stroke-opacity="0.95" stroke-width="1.8"/><rect x="1169.0" y="167.8" width="13" height="13" fill="none" stroke="#fff" stroke-opacity="0.95" stroke-width="1.8"/><rect x="1183.9" y="182.9" width="13" height="13" fill="none" stroke="#fff" stroke-opacity="0.95" stroke-width="1.8"/><rect x="1201.7" y="200.0" width="13" height="13" fill="none" stroke="#fff" stroke-opacity="0.95" stroke-width="1.8"/><rect x="1228.7" y="151.3" width="13" height="13" fill="none" stroke="#fff" stroke-opacity="0.95" stroke-width="1.8"/><rect x="1227.6" y="163.2" width="13" height="13" fill="none" stroke="#fff" stroke-opacity="0.95" stroke-width="1.8"/><rect x="1226.5" y="174.5" width="13" height="13" fill="none" stroke="#fff" stroke-opacity="0.95" stroke-width="1.8"/><rect x="1225.2" y="187.8" width="13" height="13" fill="none" stroke="#fff" stroke-opacity="0.95" stroke-width="1.8"/><rect x="1223.9" y="203.5" width="13" height="13" fill="none" stroke="#fff" stroke-opacity="0.95" stroke-width="1.8"/><rect x="1160.0" y="232.0" width="13" height="13" fill="none" stroke="#fff" stroke-opacity="0.95" stroke-width="1.8"/><rect x="1171.6" y="229.9" width="13" height="13" fill="none" stroke="#fff" stroke-opacity="0.95" stroke-width="1.8"/><rect x="1184.2" y="227.8" width="13" height="13" fill="none" stroke="#fff" stroke-opacity="0.95" stroke-width="1.8"/><rect x="1196.7" y="225.7" width="13" height="13" fill="none" stroke="#fff" stroke-opacity="0.95" stroke-width="1.8"/><rect x="1210.2" y="224.1" width="13" height="13" fill="none" stroke="#fff" stroke-opacity="0.95" stroke-width="1.8"/><rect x="1336.9" y="333.8" width="13" height="13" fill="none" stroke="#fff" stroke-opacity="0.95" stroke-width="1.8"/><rect x="1303.7" y="302.9" width="13" height="13" fill="none" stroke="#fff" stroke-opacity="0.95" stroke-width="1.8"/><rect x="1277.7" y="276.6" width="13" height="13" fill="none" stroke="#fff" stroke-opacity="0.95" stroke-width="1.8"/><rect x="1259.5" y="256.8" width="13" height="13" fill="none" stroke="#fff" stroke-opacity="0.95" stroke-width="1.8"/><rect x="1239.9" y="237.9" width="13" height="13" fill="none" stroke="#fff" stroke-opacity="0.95" stroke-width="1.8"/><rect x="1198.9" y="475.6" width="13" height="13" fill="none" stroke="#fff" stroke-opacity="0.95" stroke-width="1.8"/><rect x="1207.1" y="389.9" width="13" height="13" fill="none" stroke="#fff" stroke-opacity="0.95" stroke-width="1.8"/><rect x="1213.1" y="332.8" width="13" height="13" fill="none" stroke="#fff" stroke-opacity="0.95" stroke-width="1.8"/><rect x="1217.0" y="287.9" width="13" height="13" fill="none" stroke="#fff" stroke-opacity="0.95" stroke-width="1.8"/><rect x="1219.4" y="251.0" width="13" height="13" fill="none" stroke="#fff" stroke-opacity="0.95" stroke-width="1.8"/><rect x="1491.8" y="176.3" width="13" height="13" fill="none" stroke="#fff" stroke-opacity="0.95" stroke-width="1.8"/><rect x="1427.9" y="186.9" width="13" height="13" fill="none" stroke="#fff" stroke-opacity="0.95" stroke-width="1.8"/><rect x="1373.1" y="196.8" width="13" height="13" fill="none" stroke="#fff" stroke-opacity="0.95" stroke-width="1.8"/><rect x="1324.0" y="203.7" width="13" height="13" fill="none" stroke="#fff" stroke-opacity="0.95" stroke-width="1.8"/><rect x="1271.0" y="212.7" width="13" height="13" fill="none" stroke="#fff" stroke-opacity="0.95" stroke-width="1.8"/><rect x="1221.9" y="220.8" width="13" height="13" fill="none" stroke="#000" stroke-width="2"/><ellipse cx="1150.9" cy="150.3" rx="4.5" ry="4.1" fill="#18aa18" stroke="#0c0c1c" stroke-width="1.2"/><ellipse cx="1163.5" cy="162.3" rx="4.5" ry="4.1" fill="#58a858" stroke="#0c0c1c" stroke-width="1.2"/><ellipse cx="1175.5" cy="174.9" rx="4.5" ry="4.1" fill="#70aa70" stroke="#0c0c1c" stroke-width="1.2"/><ellipse cx="1190.4" cy="190.9" rx="4.5" ry="4.1" fill="#88aa88" stroke="#0c0c1c" stroke-width="1.2"/><ellipse cx="1206.9" cy="207.3" rx="4.5" ry="4.1" fill="#a0aa98" stroke="#0c0c1c" stroke-width="1.2"/><ellipse cx="1234.1" cy="158.1" rx="4.5" ry="4.1" fill="#c8c020" stroke="#0c0c1c" stroke-width="1.2"/><ellipse cx="1232.8" cy="170.8" rx="4.5" ry="4.1" fill="#c0bc60" stroke="#0c0c1c" stroke-width="1.2"/><ellipse cx="1232.8" cy="181.4" rx="4.5" ry="4.1" fill="#c0bc78" stroke="#0c0c1c" stroke-width="1.2"/><ellipse cx="1231.5" cy="196.1" rx="4.5" ry="4.1" fill="#bcb88c" stroke="#0c0c1c" stroke-width="1.2"/><ellipse cx="1230.1" cy="211.4" rx="4.5" ry="4.1" fill="#b8b89c" stroke="#0c0c1c" stroke-width="1.2"/><ellipse cx="1165.8" cy="241.6" rx="4.5" ry="4.1" fill="#30b0b8" stroke="#0c0c1c" stroke-width="1.2"/><ellipse cx="1178.4" cy="239.0" rx="4.5" ry="4.1" fill="#60b0b4" stroke="#0c0c1c" stroke-width="1.2"/><ellipse cx="1190.7" cy="235.8" rx="4.5" ry="4.1" fill="#80b4b4" stroke="#0c0c1c" stroke-width="1.2"/><ellipse cx="1203.0" cy="234.8" rx="4.5" ry="4.1" fill="#98b4b4" stroke="#0c0c1c" stroke-width="1.2"/><ellipse cx="1214.8" cy="231.9" rx="4.5" ry="4.1" fill="#a8b4b4" stroke="#0c0c1c" stroke-width="1.2"/><ellipse cx="1341.4" cy="346.3" rx="4.5" ry="4.1" fill="#a030a0" stroke="#0c0c1c" stroke-width="1.2"/><ellipse cx="1308.7" cy="312.5" rx="4.5" ry="4.1" fill="#b060b8" stroke="#0c0c1c" stroke-width="1.2"/><ellipse cx="1281.8" cy="284.7" rx="4.5" ry="4.1" fill="#c078c0" stroke="#0c0c1c" stroke-width="1.2"/><ellipse cx="1263.6" cy="265.9" rx="4.5" ry="4.1" fill="#c490c4" stroke="#0c0c1c" stroke-width="1.2"/><ellipse cx="1245.1" cy="246.8" rx="4.5" ry="4.1" fill="#c0a4c0" stroke="#0c0c1c" stroke-width="1.2"/><ellipse cx="1204.1" cy="483.4" rx="4.5" ry="4.1" fill="#2020a0" stroke="#0c0c1c" stroke-width="1.2"/><ellipse cx="1212.5" cy="406.1" rx="4.5" ry="4.1" fill="#5a5ab0" stroke="#0c0c1c" stroke-width="1.2"/><ellipse cx="1217.9" cy="343.2" rx="4.5" ry="4.1" fill="#6a6ab4" stroke="#0c0c1c" stroke-width="1.2"/><ellipse cx="1221.9" cy="297.4" rx="4.5" ry="4.1" fill="#8080bc" stroke="#0c0c1c" stroke-width="1.2"/><ellipse cx="1226.1" cy="260.3" rx="4.5" ry="4.1" fill="#9494c0" stroke="#0c0c1c" stroke-width="1.2"/><ellipse cx="1506.5" cy="181.5" rx="4.5" ry="4.1" fill="#c02020" stroke="#0c0c1c" stroke-width="1.2"/><ellipse cx="1439.3" cy="192.4" rx="4.5" ry="4.1" fill="#b84848" stroke="#0c0c1c" stroke-width="1.2"/><ellipse cx="1380.0" cy="201.9" rx="4.5" ry="4.1" fill="#b06060" stroke="#0c0c1c" stroke-width="1.2"/><ellipse cx="1327.9" cy="211.2" rx="4.5" ry="4.1" fill="#b07878" stroke="#0c0c1c" stroke-width="1.2"/><ellipse cx="1274.9" cy="221.2" rx="4.5" ry="4.1" fill="#b09090" stroke="#0c0c1c" stroke-width="1.2"/><circle cx="1228.7" cy="230.4" r="4.3" fill="#fff" stroke="#000" stroke-width="1.2"/><rect x="1438.5" y="458.5" width="215" height="147" fill="none" stroke="#242424" stroke-width="3"/><rect x="1440.5" y="460.5" width="211" height="143.5" fill="none" stroke="#a8a8a8" stroke-width="1.2"/><rect x="1539" y="524.7" width="13" height="13" fill="none" stroke="#f4f4f4" stroke-width="1.8"/><circle cx="1543" cy="524.5" r="4.5" fill="#b4b020" stroke="#000" stroke-width="1.3"/><rect x="1018.5" y="120.7" width="640" height="491.4" fill="none" stroke="#a0a0a0" stroke-width="1.3"/><rect x="628.5" y="655.5" width="729" height="235" fill="#000"/><rect x="629.5" y="656.5" width="727" height="14" fill="#333"/><rect x="629.5" y="670.5" width="727" height="14.2" fill="#121212"/><rect x="629.5" y="684.7" width="727" height="25.3" fill="#3d3d3d"/><rect x="629.5" y="710.0" width="727" height="25.6" fill="#808080"/><rect x="629.5" y="735.6" width="727" height="25.9" fill="#3d3d3d"/><rect x="629.5" y="761.5" width="727" height="26.1" fill="#808080"/><rect x="629.5" y="787.6" width="727" height="26.3" fill="#3d3d3d"/><rect x="629.5" y="813.9" width="727" height="25.0" fill="#808080"/><rect x="629.5" y="838.9" width="727" height="25.9" fill="#3d3d3d"/><rect x="629.5" y="864.8" width="727" height="24.8" fill="#808080"/><text transform="translate(877.2,675.7) scale(1.42,1)" font-size="14" fill="#f2f2f2" font-weight="bold" text-anchor="middle">20%</text><text transform="translate(983.6,675.7) scale(1.42,1)" font-size="14" fill="#f2f2f2" font-weight="bold" text-anchor="middle">40%</text><text transform="translate(1090.0,675.7) scale(1.42,1)" font-size="14" fill="#f2f2f2" font-weight="bold" text-anchor="middle">60%</text><text transform="translate(1196.4,675.7) scale(1.42,1)" font-size="14" fill="#f2f2f2" font-weight="bold" text-anchor="middle">80%</text><text transform="translate(1302.8,675.7) scale(1.42,1)" font-size="14" fill="#f2f2f2" font-weight="bold" text-anchor="middle">100%</text><text transform="translate(647.5,703.0) scale(1.45,1)" font-size="15.2" fill="#f4f2ec" font-weight="bold">x: CIE31</text><text transform="translate(830.3,703.0) scale(1.47,1)" font-size="15.2" fill="#f0f0f0">0,3308</text><text transform="translate(936.7,703.0) scale(1.47,1)" font-size="15.2" fill="#f0f0f0">0,3532</text><text transform="translate(1043.1,703.0) scale(1.47,1)" font-size="15.2" fill="#f0f0f0">0,3745</text><text transform="translate(1149.5,703.0) scale(1.47,1)" font-size="15.2" fill="#f0f0f0">0,3950</text><text transform="translate(1255.9,703.0) scale(1.47,1)" font-size="15.2" fill="#f0f0f0">0,4187</text><text transform="translate(647.5,728.4) scale(1.45,1)" font-size="15.2" fill="#f4f2ec" font-weight="bold">y: CIE31</text><text transform="translate(830.3,728.4) scale(1.47,1)" font-size="15.2" fill="#f0f0f0">0,3613</text><text transform="translate(936.7,728.4) scale(1.47,1)" font-size="15.2" fill="#f0f0f0">0,3988</text><text transform="translate(1043.1,728.4) scale(1.47,1)" font-size="15.2" fill="#f0f0f0">0,4344</text><text transform="translate(1149.5,728.4) scale(1.47,1)" font-size="15.2" fill="#f0f0f0">0,4684</text><text transform="translate(1255.9,728.4) scale(1.47,1)" font-size="15.2" fill="#f0f0f0">0,5077</text><text transform="translate(647.5,754.1) scale(1.45,1)" font-size="15.2" fill="#f4f2ec" font-weight="bold">Y</text><text transform="translate(830.3,754.1) scale(1.47,1)" font-size="15.2" fill="#f0f0f0">307,8159</text><text transform="translate(936.7,754.1) scale(1.47,1)" font-size="15.2" fill="#f0f0f0">304,0027</text><text transform="translate(1043.1,754.1) scale(1.47,1)" font-size="15.2" fill="#f0f0f0">300,3613</text><text transform="translate(1149.5,754.1) scale(1.47,1)" font-size="15.2" fill="#f0f0f0">296,8162</text><text transform="translate(1255.9,754.1) scale(1.47,1)" font-size="15.2" fill="#f0f0f0">293,3326</text><text transform="translate(647.5,780.1) scale(1.45,1)" font-size="15.2" fill="#f4f2ec" font-weight="bold">Target x:CIE31</text><text transform="translate(830.3,780.1) scale(1.47,1)" font-size="15.2" fill="#f0f0f0">0,3344</text><text transform="translate(936.7,780.1) scale(1.47,1)" font-size="15.2" fill="#f0f0f0">0,3564</text><text transform="translate(1043.1,780.1) scale(1.47,1)" font-size="15.2" fill="#f0f0f0">0,3773</text><text transform="translate(1149.5,780.1) scale(1.47,1)" font-size="15.2" fill="#f0f0f0">0,3969</text><text transform="translate(1255.9,780.1) scale(1.47,1)" font-size="15.2" fill="#f0f0f0">0,4193</text><text transform="translate(647.5,806.4) scale(1.45,1)" font-size="15.2" fill="#f4f2ec" font-weight="bold">Target y:CIE31</text><text transform="translate(830.3,806.4) scale(1.47,1)" font-size="15.2" fill="#f0f0f0">0,3648</text><text transform="translate(936.7,806.4) scale(1.47,1)" font-size="15.2" fill="#f0f0f0">0,4013</text><text transform="translate(1043.1,806.4) scale(1.47,1)" font-size="15.2" fill="#f0f0f0">0,4358</text><text transform="translate(1149.5,806.4) scale(1.47,1)" font-size="15.2" fill="#f0f0f0">0,4682</text><text transform="translate(1255.9,806.4) scale(1.47,1)" font-size="15.2" fill="#f0f0f0">0,5053</text><text transform="translate(647.5,832.0) scale(1.45,1)" font-size="15.2" fill="#f4f2ec" font-weight="bold">Target Y</text><text transform="translate(830.3,832.0) scale(1.47,1)" font-size="15.2" fill="#f0f0f0">305,3388</text><text transform="translate(936.7,832.0) scale(1.47,1)" font-size="15.2" fill="#f0f0f0">299,9792</text><text transform="translate(1043.1,832.0) scale(1.47,1)" font-size="15.2" fill="#f0f0f0">295,8611</text><text transform="translate(1149.5,832.0) scale(1.47,1)" font-size="15.2" fill="#f0f0f0">292,6293</text><text transform="translate(1255.9,832.0) scale(1.47,1)" font-size="15.2" fill="#f0f0f0">289,5048</text><text transform="translate(647.5,857.4) scale(1.45,1)" font-size="15.2" fill="#f4f2ec" font-weight="bold">ΔE 2000</text><text transform="translate(830.3,857.4) scale(1.47,1)" font-size="15.2" fill="#f0f0f0">1,0943</text><text transform="translate(936.7,857.4) scale(1.47,1)" font-size="15.2" fill="#f0f0f0">0,7632</text><text transform="translate(1043.1,857.4) scale(1.47,1)" font-size="15.2" fill="#f0f0f0">0,6364</text><text transform="translate(1149.5,857.4) scale(1.47,1)" font-size="15.2" fill="#f0f0f0">0,5457</text><text transform="translate(1255.9,857.4) scale(1.47,1)" font-size="15.2" fill="#f0f0f0">0,5046</text><text transform="translate(647.5,882.8) scale(1.45,1)" font-size="15.2" fill="#f4f2ec" font-weight="bold">ΔE ITP</text><text transform="translate(830.3,882.8) scale(1.47,1)" font-size="15.2" fill="#f0f0f0">2,2550</text><text transform="translate(936.7,882.8) scale(1.47,1)" font-size="15.2" fill="#f0f0f0">2,1427</text><text transform="translate(1043.1,882.8) scale(1.47,1)" font-size="15.2" fill="#f0f0f0">1,9501</text><text transform="translate(1149.5,882.8) scale(1.47,1)" font-size="15.2" fill="#f0f0f0">1,5068</text><text transform="translate(1255.9,882.8) scale(1.47,1)" font-size="15.2" fill="#f0f0f0">1,7465</text><text x="51" y="679.6" font-size="29.5" fill="#f0f0f0" textLength="232" lengthAdjust="spacingAndGlyphs">Avg dE2000: 0,91</text><text x="47.2" y="720.4" font-size="29.5" fill="#f0f0f0" textLength="241.6" lengthAdjust="spacingAndGlyphs">Max dE2000: 2,57</text><text x="15.1" y="768.3" font-size="29.8" fill="#f0f0f0" textLength="219" lengthAdjust="spacingAndGlyphs">Current Reading</text><text x="15" y="804.2" font-size="24.8" fill="#f0f0f0" textLength="102" lengthAdjust="spacingAndGlyphs">x: 0,4187</text><text x="171.8" y="804.2" font-size="24.8" fill="#f0f0f0" textLength="102" lengthAdjust="spacingAndGlyphs">y: 0,5077</text><text x="15" y="843.9" font-size="24.8" fill="#f0f0f0" textLength="96.4" lengthAdjust="spacingAndGlyphs">fL: 85,61</text><text x="15" y="877.8" font-size="25.5" fill="#f0f0f0" textLength="158.6" lengthAdjust="spacingAndGlyphs">cd/m²: 293,33</text><text x="8" y="126" font-size="39.7" fill="#f4f4f4" textLength="333" lengthAdjust="spacingAndGlyphs">Saturation Sweeps</text><rect x="1351" y="943" width="10" height="10" fill="#2e2e2e"/><path d="M1409 942 L1420 949.5 L1409 957 Z" fill="#2e2e2e"/><path d="M1465 942 h-3 v13 h3 M1474 942 h3 v13 h-3" fill="none" stroke="#333" stroke-width="2.4"/><rect x="1467" y="947.5" width="1.8" height="1.8" fill="#333"/><rect x="1470.4" y="947.5" width="1.8" height="1.8" fill="#333"/><path d="M1526 948.5 c-3-3.5-7.5-3.5-7.5 0 s4.5 3.5 7.5 0 s7.5-3.5 7.5 0 s-4.5 3.5-7.5 0z" fill="none" stroke="#333" stroke-width="2.2"/><path d="M1576 947 a6.5 6.5 0 0 1 11-2 M1588 951 a6.5 6.5 0 0 1-11 2" fill="none" stroke="#333" stroke-width="2.2"/><path d="M1585 941 l3.5 4.5 -5 1z M1579 957 l-3.5-4.5 5-1z" fill="#333"/><path d="M1363.5 982 l-5.5 6 5.5 6 M1369.5 982 l-5.5 6 5.5 6" fill="none" stroke="#3a3a3a" stroke-width="2.3"/><path d="M1627 982 l5.5 6 -5.5 6 M1633 982 l5.5 6 -5.5 6" fill="none" stroke="#3a3a3a" stroke-width="2.3"/><text x="1399.7" y="997.5" font-size="28" font-weight="bold" fill="#3a3a3a" textLength="63" lengthAdjust="spacingAndGlyphs">Back</text><text x="1533.3" y="997.5" font-size="28" font-weight="bold" fill="#3a3a3a" textLength="65" lengthAdjust="spacingAndGlyphs">Next</text><line x1="1385.5" y1="930" x2="1385.5" y2="968" stroke="#2a2a2a" stroke-width="1.3"/><line x1="1441.5" y1="930" x2="1441.5" y2="968" stroke="#2a2a2a" stroke-width="1.3"/><line x1="1497.5" y1="930" x2="1497.5" y2="968" stroke="#2a2a2a" stroke-width="1.3"/><line x1="1554.5" y1="930" x2="1554.5" y2="968" stroke="#2a2a2a" stroke-width="1.3"/><line x1="1610.5" y1="930" x2="1610.5" y2="968" stroke="#2a2a2a" stroke-width="1.3"/><line x1="1327" y1="968.5" x2="1666" y2="968.5" stroke="#2a2a2a" stroke-width="1.5"/><line x1="1497.5" y1="969" x2="1497.5" y2="1007" stroke="#2a2a2a" stroke-width="1.5"/><text x="1066" y="14.8" font-size="13.5" fill="#eaeaea" textLength="81.8" lengthAdjust="spacingAndGlyphs">X-Rite i1Pro 3</text><text x="1066" y="33.3" font-size="13.5" fill="#eaeaea" textLength="69.6" lengthAdjust="spacingAndGlyphs">Direct View</text><text x="1214.1" y="24.5" font-size="12.5" fill="#fff" text-anchor="middle">637</text><text x="1252" y="14.8" font-size="13.5" fill="#eaeaea" textLength="80" lengthAdjust="spacingAndGlyphs">Mobile Forge</text><text x="1422.2" y="14.8" font-size="13.5" fill="#eaeaea" textLength="130.9" lengthAdjust="spacingAndGlyphs">Direct Display Control</text><g transform="translate(1615,18.5)" fill="#d0d0d0"><rect x="-1.3" y="-8.3" width="2.6" height="3.5" rx="0.6" transform="rotate(0)"/><rect x="-1.3" y="-8.3" width="2.6" height="3.5" rx="0.6" transform="rotate(45)"/><rect x="-1.3" y="-8.3" width="2.6" height="3.5" rx="0.6" transform="rotate(90)"/><rect x="-1.3" y="-8.3" width="2.6" height="3.5" rx="0.6" transform="rotate(135)"/><rect x="-1.3" y="-8.3" width="2.6" height="3.5" rx="0.6" transform="rotate(180)"/><rect x="-1.3" y="-8.3" width="2.6" height="3.5" rx="0.6" transform="rotate(225)"/><rect x="-1.3" y="-8.3" width="2.6" height="3.5" rx="0.6" transform="rotate(270)"/><rect x="-1.3" y="-8.3" width="2.6" height="3.5" rx="0.6" transform="rotate(315)"/><circle r="5.6" fill="none" stroke="#d0d0d0" stroke-width="2.6"/></g><path d="M1657 11.5 L1657 24.5 L1650 18 Z" fill="#f4f4f4"/><text x="8" y="25.7" font-size="14.6" fill="#e8e8e8" textLength="57.5" lengthAdjust="spacingAndGlyphs">History 1</text><text x="92.5" y="28" font-size="15" fill="#8a8a8a" text-anchor="middle">+</text></svg><script>
(function(){
function col(u,v,k){
  var d=6*u-16*v+12, x=9*u/d, y=4*v/d;
  var X=x/y, Y=1, Z=(1-x-y)/y;
  var r=3.2406*X-1.5372*Y-0.4986*Z, g=-0.9689*X+1.8758*Y+0.0415*Z, b=0.0557*X-0.2040*Y+1.0570*Z;
  var mn=Math.min(r,g,b), out=mn<0;
  if(out){r=Math.max(r,0);g=Math.max(g,0);b=Math.max(b,0);}
  var mx=Math.max(r,g,b); r/=mx; g/=mx; b/=mx;
  function GE(c){return Math.pow(c,GAM);}
  r=GE(r);g=GE(g);b=GE(b);
  var f=out?k:1;
  return [r*255*f,g*255*f,b*255*f];
}
var GAM=1.0; var L=[0.2568,0.0166,0.2568,0.0166,0.2567,0.0166,0.2567,0.0166,0.2566,0.0166,0.2566,0.0165,0.2565,0.0164,0.2565,0.0163,0.2564,0.0163,0.2563,0.0163,0.2563,0.0163,0.2562,0.0163,0.2561,0.0163,0.2560,0.0162,0.2559,0.0161,0.2558,0.0160,0.2557,0.0159,0.2556,0.0159,0.2555,0.0159,0.2553,0.0159,0.2552,0.0159,0.2550,0.0159,0.2549,0.0159,0.2547,0.0159,0.2545,0.0159,0.2544,0.0159,0.2542,0.0159,0.2540,0.0159,0.2537,0.0159,0.2534,0.0161,0.2531,0.0163,0.2527,0.0165,0.2522,0.0169,0.2517,0.0173,0.2510,0.0178,0.2504,0.0184,0.2496,0.0191,0.2488,0.0199,0.2480,0.0207,0.2471,0.0216,0.2461,0.0226,0.2450,0.0238,0.2438,0.0251,0.2425,0.0265,0.2411,0.0279,0.2396,0.0296,0.2381,0.0313,0.2364,0.0331,0.2347,0.0350,0.2329,0.0370,0.2309,0.0391,0.2289,0.0413,0.2266,0.0437,0.2242,0.0463,0.2216,0.0490,0.2189,0.0519,0.2161,0.0549,0.2131,0.0581,0.2100,0.0614,0.2068,0.0649,0.2033,0.0688,0.1997,0.0729,0.1959,0.0773,0.1919,0.0820,0.1877,0.0871,0.1834,0.0925,0.1789,0.0982,0.1742,0.1046,0.1690,0.1119,0.1633,0.1204,0.1572,0.1297,0.1508,0.1399,0.1441,0.1510,0.1371,0.1630,0.1298,0.1760,0.1223,0.1898,0.1147,0.2044,0.1069,0.2199,0.0988,0.2364,0.0908,0.2535,0.0828,0.2708,0.0749,0.2885,0.0670,0.3066,0.0593,0.3248,0.0521,0.3427,0.0455,0.3604,0.0392,0.3780,0.0335,0.3953,0.0282,0.4117,0.0234,0.4273,0.0191,0.4424,0.0152,0.4566,0.0119,0.4698,0.0091,0.4820,0.0068,0.4932,0.0049,0.5035,0.0035,0.5131,0.0024,0.5217,0.0017,0.5295,0.0014,0.5366,0.0014,0.5432,0.0018,0.5492,0.0024,0.5546,0.0034,0.5594,0.0046,0.5638,0.0062,0.5678,0.0080,0.5713,0.0100,0.5743,0.0123,0.5770,0.0147,0.5792,0.0174,0.5810,0.0202,0.5824,0.0231,0.5837,0.0262,0.5846,0.0294,0.5853,0.0327,0.5858,0.0360,0.5861,0.0394,0.5864,0.0429,0.5866,0.0465,0.5867,0.0501,0.5868,0.0536,0.5868,0.0571,0.5867,0.0607,0.5866,0.0643,0.5865,0.0680,0.5864,0.0717,0.5861,0.0754,0.5859,0.0792,0.5856,0.0831,0.5853,0.0871,0.5849,0.0911,0.5845,0.0953,0.5841,0.0995,0.5837,0.1038,0.5832,0.1082,0.5826,0.1127,0.5821,0.1173,0.5815,0.1220,0.5809,0.1269,0.5802,0.1319,0.5796,0.1370,0.5789,0.1422,0.5781,0.1476,0.5774,0.1531,0.5766,0.1588,0.5758,0.1645,0.5749,0.1705,0.5741,0.1766,0.5732,0.1829,0.5723,0.1893,0.5713,0.1959,0.5704,0.2026,0.5694,0.2095,0.5683,0.2166,0.5673,0.2238,0.5662,0.2312,0.5651,0.2387,0.5640,0.2464,0.5628,0.2543,0.5616,0.2623,0.5604,0.2705,0.5592,0.2789,0.5580,0.2874,0.5567,0.2960,0.5554,0.3047,0.5541,0.3136,0.5528,0.3225,0.5515,0.3315,0.5501,0.3406,0.5488,0.3498,0.5474,0.3590,0.5460,0.3681,0.5446,0.3770,0.5433,0.3859,0.5420,0.3947,0.5406,0.4035,0.5393,0.4122,0.5380,0.4210,0.5367,0.4296,0.5354,0.4379,0.5342,0.4461,0.5330,0.4540,0.5318,0.4617,0.5307,0.4692,0.5296,0.4764,0.5285,0.4835,0.5274,0.4902,0.5264,0.4968,0.5254,0.5030,0.5245,0.5090,0.5236,0.5148,0.5227,0.5203,0.5219,0.5255,0.5211,0.5305,0.5204,0.5353,0.5197,0.5399,0.5190,0.5443,0.5183,0.5485,0.5177,0.5526,0.5171,0.5565,0.5165,0.5603,0.5159,0.5640,0.5154,0.5675,0.5148,0.5709,0.5143,0.5741,0.5138,0.5772,0.5134,0.5802,0.5129,0.5830,0.5125,0.5857,0.5121,0.5882,0.5117,0.5906,0.5114,0.5929,0.5111,0.5950,0.5108,0.5969,0.5105,0.5988,0.5102,0.6005,0.5099,0.6021,0.5097,0.6037,0.5095,0.6051,0.5092,0.6064,0.5090,0.6075,0.5089,0.6085,0.5087,0.6095,0.5086,0.6109,0.5084,0.6129,0.5081,0.6154,0.5077,0.6179,0.5073,0.6199,0.5070,0.6212,0.5068,0.6222,0.5067,0.6229,0.5066,0.6234,0.5065];
var cv=document.getElementById('cie'), ctx=cv.getContext('2d');
var W=cv.width,H=cv.height; // canvas covers plot 1018..1659, 120..613
var ox=1018, oy=120;
function PX(u){return 1018.5+u*1066-ox;} function PY(v){return 612.1-v*818-oy;}
var off=document.createElement('canvas'); off.width=W; off.height=H;
var oc=off.getContext('2d'); var im=oc.createImageData(W,H); var dt=im.data;
for(var j=0;j<H;j++){var v=(612.1-oy-j-0.5)/818; for(var i=0;i<W;i++){var u=(i+0.5+ox-1018.5)/1066;
  var c=col(u,v,0.6); var p=(j*W+i)*4; dt[p]=c[0];dt[p+1]=c[1];dt[p+2]=c[2];dt[p+3]=255;}}
oc.putImageData(im,0,0);
ctx.save(); ctx.beginPath();
ctx.moveTo(PX(L[0]),PY(L[1]));
for(var n=2;n<L.length;n+=2){ctx.lineTo(PX(L[n]),PY(L[n+1]));}
ctx.closePath(); ctx.clip();
ctx.beginPath(); ctx.rect(0.5,0.7,640,491.4); ctx.clip();
ctx.drawImage(off,0,0); ctx.restore();
// inset
var iv=document.getElementById('ins'), ic=iv.getContext('2d'); var IW=iv.width, IH=iv.height;
var id=ic.createImageData(IW,IH), dd=id.data;
for(var j=0;j<IH;j++){for(var i=0;i<IW;i++){var dd0=j+0.5-(16+(i+0.5)*0.533); var ie=i+0.5+0.555*dd0; var u=0.17992+ie/4400; var v=0.5625-0.12158*(u-0.125)-dd0/15000;
  var c=col(u,v,0.6); var p=(j*IW+i)*4; dd[p]=c[0];dd[p+1]=c[1];dd[p+2]=c[2];dd[p+3]=255;}}
ic.putImageData(id,0,0);
})();
</script></body></html>
